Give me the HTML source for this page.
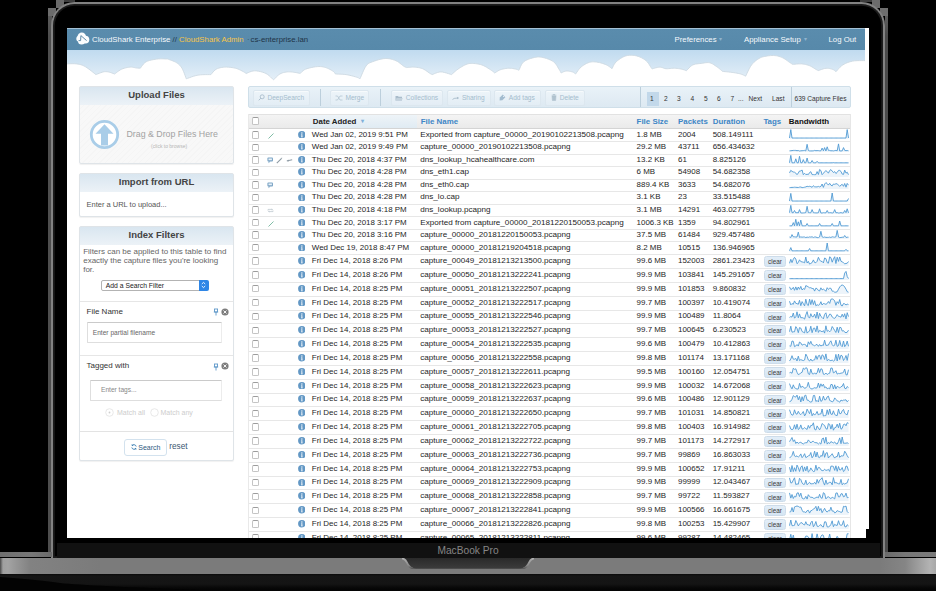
<!DOCTYPE html>
<html><head><meta charset="utf-8">
<style>
*{box-sizing:border-box}
html,body{margin:0;padding:0}
body{width:936px;height:591px;overflow:hidden;background:#000;position:relative;font-family:"Liberation Sans",sans-serif;color:#222}
.abs{position:absolute}
#lid{position:absolute;left:51.4px;top:1.8px;width:834px;height:556px;border:2.7px solid #828282;border-bottom:none;border-radius:23.5px 23.5px 0 0;background:#000;box-shadow:inset 0 0 0 1.8px #1b1b1b}
#bezel{position:absolute;left:57px;top:542.5px;width:823px;height:15px;background:#111}
#mbp{position:absolute;left:437px;top:544px;width:62px;text-align:center;font-size:10.2px;color:#858585;line-height:14px}
#sideL{position:absolute;left:0;top:552px;width:51.5px;height:5px;background:linear-gradient(90deg,#6e6e6e,#777 60%,#6a6a6a)}
#sideR{position:absolute;left:885.2px;top:552px;width:51px;height:5px;background:linear-gradient(90deg,#6a6a6a,#777 40%,#7a7a7a)}
#base{position:absolute;left:0;top:557.5px;width:936px;height:16.5px;background:linear-gradient(90deg,#4a4a4a 0px,#a0a0a0 3px,#a3a3a3 8px,#969696 16px,#828282 30px,#7b7b7b 100px,#7b7b7b 880px,#858585 905px,#b3b3b3 930px,#a8a8a8 936px)}
#notch{position:absolute;left:402px;top:557px;width:132px;height:11.5px;background:linear-gradient(#2a2a2a,#444);border-radius:0 0 10px 10px / 0 0 9px 9px}
#shadow{position:absolute;left:0;top:574px;width:936px;height:17px;background:linear-gradient(#0a0a0a 0,#151515 2px,#141414 10px,#070707 14px,#030303 17px)}
#screen{position:absolute;left:67px;top:28px;width:802px;height:510px;background:#fff;overflow:hidden}
#hdr{position:absolute;left:67px;top:28px;width:798px;height:21.6px;background:linear-gradient(#a3c0d4 0,#a3c0d4 1px,#5a8cad 1px,#5789aa 100%);color:#f6f9fc;font-size:7.8px;line-height:23px}
#hdr span{position:absolute;top:0;white-space:nowrap}
.panel{position:absolute;left:79px;width:155px;border:1px solid #dfe4e8;border-radius:2px;background:#fff;box-shadow:0 1px 1px rgba(0,0,0,.06)}
.ph{position:absolute;left:0;top:0;width:100%;height:18px;background:linear-gradient(#d9e6f0,#ecf2f7);text-align:center;font-weight:bold;font-size:9.5px;line-height:16px;color:#444}
.t{position:absolute;white-space:nowrap;line-height:1}
#tb{position:absolute;left:248px;top:86.4px;width:602.5px;height:21.8px;border:1px solid #cfdfe9;border-radius:2px;background:linear-gradient(#e9f2f8,#dde9f2)}
.btn{position:absolute;top:3px;height:16px;border:1px solid #dce7ef;border-radius:2px;background:linear-gradient(#edf4f9,#e3edf5);box-shadow:inset 0 1px 0 #f6fafc;color:#a4bccd;font-size:6.6px;line-height:14px;white-space:nowrap;text-align:center}
.ti{display:inline-block;vertical-align:middle;margin-right:2.5px;margin-top:-1.5px}
.sep{position:absolute;top:2px;width:1px;height:17px;background:#bccfdc}
.pg{position:absolute;top:0;font-size:6.6px;line-height:23px;color:#333;white-space:nowrap}
#tbl{position:absolute;left:248px;top:114.2px;width:602.5px;height:423.8px;overflow:hidden;border-left:1px solid #e9e9e9;border-right:1px solid #e6e6e6}
#th{position:absolute;left:0;top:0;width:100%;height:14.5px;background:linear-gradient(#f4f4f4,#eaeaea);border-top:1px solid #e2e2e2;border-bottom:1px solid #d4d4d4}
#th span{position:absolute;top:0;line-height:13.4px;font-size:7.9px;font-weight:bold;color:#3d86c6;white-space:nowrap}
.row{position:absolute;left:0;width:100%;border-bottom:1px solid #e7e7e7;background:#fff}
.row .c{position:absolute;top:50%;margin-top:-0.6px;transform:translateY(-50%);font-size:7.95px;line-height:1;white-space:nowrap;color:#1e1e1e}
.cb{position:absolute;left:3px;top:50%;margin-top:-4.2px;width:7px;height:7.4px;border:1px solid #c4c4c4;border-top-color:#9c9c9c;border-radius:1.8px;background:#fff}
.info{position:absolute;left:48.9px;top:50%;margin-top:-4.5px;width:7.6px;height:7.6px;line-height:0}
.ic{position:absolute;top:50%;margin-top:-3.2px}
.clear{position:absolute;left:515px;top:50%;margin-top:-5.3px;width:22px;height:10.6px;border:1px solid #cddcea;border-radius:2.5px;background:linear-gradient(#e3eef8,#d5e5f3);font-size:6.4px;line-height:9px;text-align:center;color:#3a3a3a}
.spark{position:absolute;left:540px;bottom:2px;width:60px;height:10px;line-height:0}
.spark svg{display:block}
</style></head><body>
<div class="abs" style="left:48px;top:8px;width:8px;height:8.2px;background:#6c6c6c"></div>
<div class="abs" style="left:55.9px;top:0;width:8px;height:7.8px;background:#6a6a6a"></div>
<div class="abs" style="left:63.8px;top:0;width:11px;height:2px;background:#3e3e3e"></div>
<div class="abs" style="left:48px;top:16.2px;width:3.6px;height:536px;background:linear-gradient(#5a5a5a,#4e4e4e 20px)"></div>
<div class="abs" style="left:879.7px;top:8px;width:8.3px;height:8.2px;background:#6e6e6e"></div>
<div class="abs" style="left:871.8px;top:0;width:8px;height:7.9px;background:#6c6c6c"></div>
<div class="abs" style="left:860px;top:0;width:12px;height:2px;background:#3e3e3e"></div>
<div class="abs" style="left:885.2px;top:16.2px;width:2.9px;height:536px;background:linear-gradient(#5e5e5e,#4a4a4a 20px)"></div>
<div id="lid"></div>
<div id="bezel"></div>
<div id="mbp">MacBook Pro</div>
<div id="sideL"></div>
<div id="sideR"></div>
<div id="base"></div>
<svg class="abs" style="left:401px;top:557.5px" width="134" height="11.5" viewBox="0 0 134 11.5"><defs><linearGradient id="ng" x1="0" y1="0" x2="0" y2="1"><stop offset="0" stop-color="#2a2a2a"/><stop offset="1" stop-color="#3c3c3c"/></linearGradient><linearGradient id="hl" x1="0" y1="0" x2="0" y2="1"><stop offset="0" stop-color="#b0b0b0"/><stop offset="0.7" stop-color="#8a8a8a"/><stop offset="1" stop-color="#5a5a5a"/></linearGradient></defs>
<path d="M0.5 0 Q4 0.5 6 4.5 Q9 10.8 15 10.8 L119 10.8 Q125 10.8 128 4.5 Q130 0.5 133.5 0 Z" fill="url(#ng)"/>
<path d="M1 0.3 Q4.2 0.8 6 4.6 Q8.2 9.6 12 10.4" fill="none" stroke="url(#hl)" stroke-width="1.8"/>
<path d="M133 0.3 Q129.8 0.8 128 4.6 Q125.8 9.6 122 10.4" fill="none" stroke="url(#hl)" stroke-width="1.8"/></svg>
<div id="shadow"></div>
<svg class="abs" style="left:0;top:574px" width="200" height="17" viewBox="0 0 200 17"><path d="M0 3 Q40 6 60 9 Q90 12 200 16 L200 17 L0 17 Z" fill="#030303"/></svg>

<div id="screen">
<svg width="802" height="60" viewBox="67 28 802 60" style="position:absolute;left:0;top:0"><defs><linearGradient id="sky" x1="0" y1="0" x2="0" y2="1"><stop offset="0" stop-color="#bfdaef"/><stop offset="1" stop-color="#e6f0f8"/></linearGradient></defs><rect x="67" y="49" width="802" height="32" fill="url(#sky)"/><path d="M66.00,63.90 L67.19,63.87 L68.86,63.80 L70.82,63.73 L72.90,63.70 L74.92,63.74 L76.70,63.90 L78.22,64.13 L79.61,64.40 L80.95,64.75 L82.29,65.21 L83.68,65.81 L85.20,66.60 L86.98,67.72 L89.00,69.17 L91.08,70.77 L93.04,72.33 L94.71,73.67 L95.90,74.60 L96.74,74.27 L97.93,73.80 L99.32,73.24 L100.79,72.69 L102.19,72.22 L103.40,71.90 L104.40,71.73 L105.31,71.66 L106.15,71.66 L106.97,71.72 L107.81,71.84 L108.70,72.00 L109.72,72.25 L110.84,72.60 L111.98,73.01 L113.05,73.41 L113.95,73.76 L114.60,74.00 L115.34,73.45 L116.36,72.66 L117.57,71.73 L118.90,70.78 L120.27,69.90 L121.60,69.20 L122.95,68.66 L124.40,68.19 L125.89,67.79 L127.37,67.48 L128.79,67.25 L130.10,67.10 L131.32,67.08 L132.49,67.20 L133.59,67.41 L134.64,67.64 L135.61,67.86 L136.50,68.00 L137.33,68.08 L138.10,68.13 L138.80,68.16 L139.41,68.17 L139.92,68.19 L140.30,68.20 L140.87,67.46 L141.62,66.40 L142.53,65.17 L143.59,63.90 L144.78,62.73 L146.10,61.80 L147.62,61.11 L149.36,60.53 L151.24,60.06 L153.16,59.67 L155.05,59.36 L156.80,59.10 L158.49,58.92 L160.20,58.85 L161.87,58.84 L163.43,58.89 L164.83,58.95 L166.00,59.00 L166.83,59.03 L167.35,59.05 L167.71,59.09 L168.04,59.18 L168.49,59.34 L169.20,59.60 L170.23,59.96 L171.46,60.39 L172.82,60.90 L174.20,61.47 L175.53,62.11 L176.70,62.80 L177.72,63.51 L178.67,64.24 L179.55,65.04 L180.39,65.93 L181.20,66.97 L182.00,68.20 L182.82,69.79 L183.67,71.74 L184.48,73.84 L185.22,75.86 L185.84,77.59 L186.30,78.80 L187.56,78.36 L189.29,77.72 L191.34,76.98 L193.58,76.23 L195.85,75.57 L198.00,75.10 L200.23,74.83 L202.69,74.68 L205.18,74.62 L207.51,74.61 L209.48,74.62 L210.90,74.60 L211.44,73.97 L212.15,73.08 L213.01,72.03 L213.99,70.96 L215.06,69.97 L216.20,69.20 L217.42,68.62 L218.75,68.14 L220.17,67.74 L221.66,67.44 L223.21,67.23 L224.80,67.10 L226.49,67.07 L228.30,67.15 L230.17,67.32 L232.02,67.56 L233.79,67.86 L235.40,68.20 L236.88,68.62 L238.29,69.15 L239.61,69.74 L240.83,70.34 L241.93,70.91 L242.90,71.40 L243.72,71.84 L244.40,72.26 L244.97,72.65 L245.43,73.00 L245.80,73.28 L246.10,73.50 L247.00,73.14 L248.23,72.60 L249.69,71.98 L251.31,71.40 L253.01,70.97 L254.70,70.80 L256.47,70.89 L258.41,71.16 L260.42,71.58 L262.41,72.13 L264.31,72.77 L266.00,73.50 L267.56,74.43 L269.06,75.60 L270.46,76.87 L271.70,78.10 L272.73,79.16 L273.50,79.90 L274.18,79.21 L275.12,78.23 L276.23,77.08 L277.45,75.90 L278.70,74.83 L279.90,74.00 L281.09,73.40 L282.32,72.92 L283.59,72.55 L284.87,72.27 L286.14,72.06 L287.40,71.90 L288.66,71.83 L289.95,71.85 L291.23,71.95 L292.49,72.09 L293.68,72.25 L294.80,72.40 L295.88,72.56 L296.95,72.76 L297.96,72.98 L298.87,73.19 L299.64,73.37 L300.20,73.50 L300.70,73.01 L301.33,72.32 L302.11,71.51 L303.06,70.67 L304.18,69.87 L305.50,69.20 L307.13,68.63 L309.07,68.07 L311.20,67.57 L313.37,67.14 L315.45,66.81 L317.30,66.60 L318.92,66.53 L320.41,66.56 L321.82,66.70 L323.16,66.93 L324.48,67.23 L325.80,67.60 L327.17,68.09 L328.57,68.70 L329.95,69.40 L331.24,70.12 L332.37,70.80 L333.30,71.40 L333.99,71.93 L334.48,72.45 L334.82,72.94 L335.06,73.37 L335.23,73.73 L335.40,74.00 L336.56,74.04 L338.17,74.08 L340.08,74.14 L342.14,74.23 L344.19,74.38 L346.10,74.60 L347.97,74.93 L349.94,75.36 L351.92,75.84 L353.79,76.33 L355.45,76.80 L356.80,77.20 L357.80,77.54 L358.54,77.87 L359.07,78.16 L359.45,78.42 L359.74,78.64 L360.00,78.80 L360.65,77.31 L361.54,75.16 L362.60,72.66 L363.75,70.10 L364.91,67.78 L366.00,66.00 L366.97,64.79 L367.87,63.93 L368.78,63.31 L369.78,62.81 L370.96,62.35 L372.40,61.80 L374.19,61.13 L376.27,60.43 L378.53,59.75 L380.85,59.16 L383.11,58.72 L385.20,58.50 L387.14,58.51 L389.04,58.71 L390.88,59.06 L392.65,59.53 L394.33,60.09 L395.90,60.70 L397.38,61.45 L398.80,62.37 L400.12,63.39 L401.34,64.39 L402.44,65.29 L403.40,66.00 L404.22,66.50 L404.90,66.87 L405.47,67.13 L405.93,67.32 L406.30,67.47 L406.60,67.60 L407.40,67.52 L408.51,67.39 L409.82,67.25 L411.25,67.13 L412.71,67.07 L414.10,67.10 L415.47,67.21 L416.90,67.36 L418.35,67.57 L419.80,67.85 L421.23,68.22 L422.60,68.70 L423.97,69.36 L425.37,70.20 L426.75,71.13 L428.04,72.06 L429.17,72.88 L430.10,73.50 L430.79,73.91 L431.28,74.18 L431.62,74.35 L431.86,74.45 L432.03,74.52 L432.20,74.60 L433.11,74.24 L434.35,73.70 L435.83,73.08 L437.46,72.50 L439.15,72.07 L440.80,71.90 L442.59,72.07 L444.61,72.50 L446.69,73.08 L448.65,73.70 L450.31,74.24 L451.50,74.60 L452.18,74.00 L453.10,73.17 L454.19,72.19 L455.40,71.15 L456.66,70.12 L457.90,69.20 L459.17,68.33 L460.54,67.45 L461.95,66.58 L463.36,65.77 L464.73,65.07 L466.00,64.50 L467.13,64.08 L468.14,63.77 L469.11,63.56 L470.09,63.43 L471.17,63.39 L472.40,63.40 L473.83,63.47 L475.40,63.61 L477.06,63.83 L478.76,64.13 L480.42,64.52 L482.00,65.00 L483.54,65.63 L485.10,66.42 L486.64,67.30 L488.10,68.20 L489.43,69.06 L490.60,69.80 L491.60,70.46 L492.48,71.10 L493.24,71.70 L493.87,72.23 L494.39,72.67 L494.80,73.00 L495.35,72.63 L496.09,72.11 L496.97,71.50 L497.97,70.87 L499.06,70.28 L500.20,69.80 L501.45,69.41 L502.84,69.05 L504.32,68.74 L505.83,68.48 L507.31,68.30 L508.70,68.20 L510.06,68.22 L511.45,68.34 L512.81,68.53 L514.09,68.76 L515.24,69.00 L516.20,69.20 L516.96,69.39 L517.56,69.60 L518.02,69.81 L518.38,70.01 L518.66,70.18 L518.90,70.30 L519.35,69.33 L519.93,67.94 L520.63,66.32 L521.49,64.64 L522.50,63.07 L523.70,61.80 L525.17,60.79 L526.91,59.90 L528.82,59.12 L530.78,58.46 L532.68,57.92 L534.40,57.50 L535.92,57.20 L537.31,57.02 L538.65,56.96 L539.99,57.02 L541.38,57.20 L542.90,57.50 L544.62,57.93 L546.50,58.50 L548.44,59.19 L550.34,59.98 L552.10,60.85 L553.60,61.80 L554.84,62.90 L555.91,64.17 L556.84,65.53 L557.64,66.89 L558.35,68.14 L559.00,69.20 L559.57,70.09 L560.02,70.87 L560.39,71.56 L560.68,72.15 L560.91,72.63 L561.10,73.00 L561.62,72.75 L562.31,72.37 L563.15,71.94 L564.07,71.53 L565.04,71.19 L566.00,71.00 L567.02,70.97 L568.14,71.04 L569.31,71.19 L570.45,71.40 L571.50,71.65 L572.40,71.90 L573.16,72.20 L573.82,72.59 L574.40,73.01 L574.89,73.41 L575.29,73.76 L575.60,74.00 L576.15,73.22 L576.89,72.13 L577.77,70.85 L578.77,69.50 L579.86,68.21 L581.00,67.10 L582.24,66.12 L583.60,65.17 L585.06,64.27 L586.55,63.47 L588.05,62.80 L589.50,62.30 L590.92,61.99 L592.33,61.84 L593.74,61.83 L595.16,61.92 L596.58,62.09 L598.00,62.30 L599.46,62.58 L600.98,62.96 L602.49,63.42 L603.97,63.93 L605.35,64.46 L606.60,65.00 L607.75,65.60 L608.84,66.30 L609.84,67.02 L610.72,67.70 L611.45,68.29 L612.00,68.70 L612.39,67.94 L612.89,66.87 L613.50,65.62 L614.24,64.28 L615.14,62.97 L616.20,61.80 L617.47,60.69 L618.96,59.54 L620.59,58.42 L622.32,57.39 L624.07,56.53 L625.80,55.90 L627.53,55.50 L629.33,55.29 L631.15,55.23 L632.97,55.33 L634.77,55.55 L636.50,55.90 L638.21,56.39 L639.94,57.04 L641.63,57.83 L643.25,58.72 L644.76,59.69 L646.10,60.70 L647.29,61.87 L648.37,63.26 L649.34,64.72 L650.18,66.12 L650.90,67.32 L651.50,68.20 L651.93,68.69 L652.20,68.90 L652.34,68.92 L652.40,68.83 L652.44,68.73 L652.50,68.70 L653.33,68.49 L654.50,68.17 L655.88,67.80 L657.33,67.46 L658.75,67.20 L660.00,67.10 L661.06,67.21 L662.02,67.47 L662.94,67.83 L663.87,68.20 L664.87,68.52 L666.00,68.70 L667.28,68.72 L668.69,68.63 L670.16,68.49 L671.65,68.33 L673.11,68.22 L674.50,68.20 L675.84,68.27 L677.19,68.40 L678.51,68.57 L679.77,68.77 L680.95,68.98 L682.00,69.20 L682.95,69.45 L683.83,69.75 L684.62,70.06 L685.30,70.36 L685.87,70.62 L686.30,70.80 L686.97,70.12 L687.88,69.14 L688.96,68.00 L690.17,66.84 L691.43,65.79 L692.70,65.00 L694.01,64.48 L695.41,64.12 L696.87,63.88 L698.36,63.70 L699.85,63.56 L701.30,63.40 L702.73,63.19 L704.18,62.94 L705.62,62.73 L707.04,62.60 L708.44,62.60 L709.80,62.80 L711.13,63.23 L712.46,63.87 L713.75,64.64 L715.00,65.49 L716.19,66.33 L717.30,67.10 L718.37,67.87 L719.43,68.69 L720.42,69.52 L721.31,70.29 L722.05,70.93 L722.60,71.40 L723.66,71.50 L725.13,71.64 L726.86,71.80 L728.72,71.99 L730.55,72.19 L732.20,72.40 L733.74,72.63 L735.28,72.87 L736.80,73.13 L738.25,73.40 L739.60,73.69 L740.80,74.00 L741.88,74.36 L742.86,74.77 L743.74,75.20 L744.50,75.61 L745.12,75.95 L745.60,76.20 L746.22,74.93 L747.07,73.12 L748.08,71.01 L749.20,68.80 L750.36,66.72 L751.50,65.00 L752.66,63.60 L753.90,62.33 L755.18,61.19 L756.48,60.18 L757.76,59.29 L759.00,58.50 L760.17,57.85 L761.30,57.36 L762.41,56.98 L763.54,56.69 L764.73,56.44 L766.00,56.20 L767.39,55.97 L768.87,55.77 L770.40,55.62 L771.94,55.53 L773.46,55.52 L774.90,55.60 L776.28,55.78 L777.63,56.04 L778.94,56.39 L780.23,56.80 L781.48,57.27 L782.70,57.80 L783.91,58.43 L785.11,59.19 L786.28,60.00 L787.38,60.81 L788.40,61.57 L789.30,62.20 L790.09,62.72 L790.80,63.18 L791.41,63.58 L791.94,63.91 L792.37,64.19 L792.70,64.40 L793.68,64.32 L795.05,64.19 L796.67,64.04 L798.39,63.92 L800.08,63.86 L801.60,63.90 L802.96,64.03 L804.29,64.23 L805.59,64.48 L806.85,64.80 L808.09,65.17 L809.30,65.60 L810.53,66.14 L811.77,66.81 L812.99,67.53 L814.14,68.25 L815.16,68.89 L816.00,69.40 L816.65,69.76 L817.15,70.04 L817.52,70.24 L817.80,70.39 L818.01,70.50 L818.20,70.60 L819.06,70.31 L820.26,69.88 L821.68,69.38 L823.19,68.90 L824.67,68.51 L826.00,68.30 L827.22,68.27 L828.44,68.37 L829.63,68.56 L830.76,68.82 L831.79,69.11 L832.70,69.40 L833.48,69.74 L834.17,70.16 L834.77,70.62 L835.27,71.06 L835.68,71.44 L836.00,71.70 L836.69,70.94 L837.61,69.86 L838.73,68.59 L839.97,67.27 L841.31,66.03 L842.70,65.00 L844.15,64.15 L845.70,63.37 L847.35,62.66 L849.07,62.04 L850.86,61.52 L852.70,61.10 L854.76,60.81 L857.09,60.66 L859.48,60.61 L861.73,60.60 L863.64,60.62 L865.00,60.60 L867,60.6 L867,90 L66,90 Z" fill="#fff" stroke="#cdd9e2" stroke-width="0.9"/><rect x="865" y="28" width="4" height="60" fill="#fff"/></svg>
</div>
<div class="abs" style="left:866px;top:529px;width:4px;height:10px;background:#000"></div>

<div id="hdr">
 <svg style="position:absolute;left:9px;top:3px" width="14" height="15" viewBox="0 0 14 15"><g fill="#fbfdfe"><circle cx="5.8" cy="5.6" r="4.2"/><circle cx="9.4" cy="8.6" r="3.9"/><circle cx="5.6" cy="10" r="3.6"/><circle cx="3.3" cy="7.8" r="3"/></g><path d="M2.6 9.6 L4.6 9.6 L4.9 4.6 L10.6 9.6" fill="none" stroke="#4f7f9f" stroke-width="0.9"/></svg>
 <span style="left:25px">CloudShark Enterprise</span>
 <span style="left:105.5px;color:#22384a">//</span>
 <span style="left:112px;color:#f7c548">CloudShark Admin</span>
 <span style="left:180px;color:#2f4a60">·</span>
 <span style="left:183.5px;color:#1e3346">cs-enterprise.lan</span>
 <span style="left:607.5px">Preferences</span><span style="left:652px;color:#8fb4cf;font-size:6px">▾</span>
 <span style="left:677px">Appliance Setup</span><span style="left:737px;color:#8fb4cf;font-size:6px">▾</span>
 <span style="left:761.5px">Log Out</span>
</div>

<!-- Upload Files -->
<div class="panel" style="top:86px;height:78px;background:repeating-linear-gradient(135deg,#f8f8f8 0 3px,#f5f5f5 3px 4px)">
 <div class="ph">Upload Files</div>
 <svg style="position:absolute;left:9px;top:32px" width="31" height="31" viewBox="0 0 31 31"><circle cx="15.5" cy="15.5" r="13.2" fill="#fff" stroke="#a9cde8" stroke-width="2.8"/><path d="M15.5 5.2 L24.5 14.8 L19 14.8 L19 26.5 L12 26.5 L12 14.8 L6.5 14.8 Z" fill="#a9cde8"/></svg>
 <span class="t" style="left:46.5px;top:43px;font-size:8.8px;color:#a2a2a2">Drag &amp; Drop Files Here</span>
 <span class="t" style="left:71px;top:57px;font-size:5px;color:#b5b5b5">(click to browse)</span>
</div>

<!-- Import from URL -->
<div class="panel" style="top:173px;height:43.5px">
 <div class="ph">Import from URL</div>
 <span class="t" style="left:6.5px;top:27px;font-size:7.5px;color:#555">Enter a URL to upload...</span>
</div>

<!-- Index Filters -->
<div class="panel" style="top:226.3px;height:235px">
 <div class="ph" style="height:17.5px;line-height:15.6px">Index Filters</div>
 <div class="t" style="left:3.2px;top:21px;font-size:8px;line-height:8.8px;color:#666">Filters can be applied to this table to find<br>exactly the capture files you're looking<br>for.</div>
 <div class="abs" style="left:20.8px;top:53.2px;width:107px;height:10.5px;border:1px solid #b3b3b3;border-radius:2px;background:#fff;font-size:6.8px;line-height:9px;color:#222;padding-left:4px">Add a Search Filter</div>
 <div class="abs" style="left:119.2px;top:53.2px;width:9.5px;height:10.5px;background:#2f86e6;border-radius:0 2px 2px 0"><svg width="9" height="10" viewBox="0 0 9 10" style="display:block"><path d="M2.8 4 L4.5 2.4 L6.2 4 M2.8 6 L4.5 7.6 L6.2 6" fill="none" stroke="#fff" stroke-width="0.9"/></svg></div>
 <div class="abs" style="left:0;top:74px;width:100%;height:1px;background:#e6e6e6"></div>
 <span class="t" style="left:6.5px;top:80.5px;font-size:8px;color:#333">File Name</span>
 <svg class="abs" style="left:133px;top:81px" width="6" height="8" viewBox="0 0 6 8"><path d="M1 1 h4 M1.5 1 v3 h3 v-3 M0.8 4 h4.4 M3 4 v3.5" stroke="#5d97c8" stroke-width="0.9" fill="none"/></svg>
 <svg class="abs" style="left:141px;top:80.6px" width="8" height="8" viewBox="0 0 8 8"><circle cx="4" cy="4" r="3.6" fill="#7d7d7d"/><path d="M2.5 2.5 L5.5 5.5 M5.5 2.5 L2.5 5.5" stroke="#fff" stroke-width="0.9"/></svg>
 <div class="abs" style="left:6.5px;top:95.2px;width:135px;height:21px;border:1px solid #dedede;border-top-color:#cacaca;border-right-color:#ececec;border-radius:1px;background:#fff"></div>
 <span class="t" style="left:12.8px;top:102.5px;font-size:6.6px;color:#666">Enter partial filename</span>
 <div class="abs" style="left:0;top:127.7px;width:100%;height:1px;background:#e6e6e6"></div>
 <span class="t" style="left:6.5px;top:135px;font-size:8px;color:#333">Tagged with</span>
 <svg class="abs" style="left:133px;top:135.5px" width="6" height="8" viewBox="0 0 6 8"><path d="M1 1 h4 M1.5 1 v3 h3 v-3 M0.8 4 h4.4 M3 4 v3.5" stroke="#5d97c8" stroke-width="0.9" fill="none"/></svg>
 <svg class="abs" style="left:141px;top:135px" width="8" height="8" viewBox="0 0 8 8"><circle cx="4" cy="4" r="3.6" fill="#7d7d7d"/><path d="M2.5 2.5 L5.5 5.5 M5.5 2.5 L2.5 5.5" stroke="#fff" stroke-width="0.9"/></svg>
 <div class="abs" style="left:9.5px;top:152.9px;width:132px;height:20.5px;border:1px solid #dedede;border-top-color:#cacaca;border-right-color:#ececec;border-radius:1px;background:#fff"></div>
 <span class="t" style="left:21px;top:159.5px;font-size:6.6px;color:#888">Enter tags...</span>
 <svg class="abs" style="left:25px;top:180.5px" width="9" height="9" viewBox="0 0 9 9"><circle cx="4.5" cy="4.5" r="3.8" fill="#fff" stroke="#e2e2e2" stroke-width="0.8"/><circle cx="4.5" cy="4.5" r="0.9" fill="#cfcfcf"/></svg>
 <span class="t" style="left:37px;top:181.5px;font-size:7px;color:#cdcdcd">Match all</span>
 <svg class="abs" style="left:69.5px;top:180.5px" width="9" height="9" viewBox="0 0 9 9"><circle cx="4.5" cy="4.5" r="3.8" fill="#fff" stroke="#e2e2e2" stroke-width="0.8"/></svg>
 <span class="t" style="left:80.5px;top:181.5px;font-size:7px;color:#cdcdcd">Match any</span>
 <div class="abs" style="left:0;top:204.2px;width:100%;height:1px;background:#e3e3e3"></div>
 <div class="abs" style="left:44.4px;top:212px;width:42.5px;height:17px;border:1px solid #d3e2ee;border-radius:3px;background:#fff"></div>
 <svg class="abs" style="left:49.5px;top:215.8px" width="8" height="8" viewBox="0 0 8 8"><path d="M6.2 3.5 A2.4 2.4 0 0 0 2 2.6 M1.8 4.5 A2.4 2.4 0 0 0 6 5.4" fill="none" stroke="#3c7fb3" stroke-width="1"/><path d="M1.2 1.5 L2.2 3.2 L3.4 1.9 Z M6.8 6.5 L5.8 4.8 L4.6 6.1 Z" fill="#3c7fb3"/></svg>
 <span class="t" style="left:58.3px;top:216.6px;font-size:7px;color:#2d5a80">Search</span>
 <span class="t" style="left:89.3px;top:216px;font-size:8.2px;color:#3a5670">reset</span>
</div>

<!-- toolbar -->
<div id="tb">
 <div class="btn" style="left:3.5px;width:57px"><svg class="ti" width="7" height="7" viewBox="0 0 7 7"><circle cx="4.2" cy="2.8" r="2" fill="none" stroke="#a9bccb" stroke-width="0.9"/><path d="M2.8 4.2 L0.8 6.3" stroke="#a9bccb" stroke-width="1"/></svg>DeepSearch</div>
 <div class="sep" style="left:71px"></div>
 <div class="btn" style="left:81px;width:39px"><svg class="ti" width="8" height="6" viewBox="0 0 8 6"><path d="M0.5 1 L2.5 1 L5 5 L7.5 5 M0.5 5 L2.5 5 L5 1 L7.5 1" fill="none" stroke="#b4c6d3" stroke-width="0.8"/></svg>Merge</div>
 <div class="sep" style="left:131px"></div>
 <div class="btn" style="left:141.5px;width:52.5px"><svg class="ti" width="8" height="6" viewBox="0 0 8 6"><path d="M0.5 1 L3 1 L3.6 1.8 L7 1.8 L7 5.5 L0.5 5.5 Z" fill="#a9bccb"/><path d="M1.5 3 L7.8 3 L6.8 5.5 L0.5 5.5 Z" fill="#c3d2dd"/></svg>Collections</div>
 <div class="btn" style="left:197.5px;width:44px"><svg class="ti" width="7" height="6" viewBox="0 0 7 6"><path d="M0.5 4.5 Q2 3 4 3.2 L6.5 3" fill="none" stroke="#a9bccb" stroke-width="0.9"/><path d="M5 1.8 L6.8 3 L5 4.2 Z" fill="#a9bccb"/></svg>Sharing</div>
 <div class="btn" style="left:244.5px;width:47px"><svg class="ti" width="7" height="7" viewBox="0 0 7 7"><path d="M0.6 6.4 L0.8 3.6 L3.8 0.6 L6.4 3.2 L3.4 6.2 Z" fill="#a3bccf"/><circle cx="4.6" cy="2.4" r="0.6" fill="#e6eff6"/></svg>Add tags</div>
 <div class="btn" style="left:296px;width:40px"><svg class="ti" width="6" height="7" viewBox="0 0 6 7"><path d="M0.5 1.2 H5.5 M2 1.2 V0.5 H4 V1.2 M1 2 H5 L4.6 6.5 H1.4 Z" fill="#b0c2cf" stroke="#b0c2cf" stroke-width="0.6"/></svg>Delete</div>
 <div class="sep" style="left:391px;top:0;height:20px"></div>
 <div class="abs" style="left:397.5px;top:4.5px;width:12px;height:14px;background:#c2d8ea"></div>
 <span class="pg" style="left:401px">1</span>
 <span class="pg" style="left:415px">2</span>
 <span class="pg" style="left:428px">3</span>
 <span class="pg" style="left:441.5px">4</span>
 <span class="pg" style="left:455px">5</span>
 <span class="pg" style="left:468px">6</span>
 <span class="pg" style="left:481.5px">7</span>
 <span class="pg" style="left:489px">...</span>
 <span class="pg" style="left:499.5px">Next</span>
 <span class="pg" style="left:523px">Last</span>
 <div class="sep" style="left:542px;top:0;height:20px"></div>
 <span class="pg" style="left:545.5px">639 Capture Files</span>
</div>

<!-- table -->
<div id="tbl">
 <div id="th">
  <div class="abs" style="left:61px;top:0;width:107px;height:100%;background:linear-gradient(#eef4f8,#e0ebf3)"></div>
  <div class="cb" style="left:3px"></div>
  <span style="left:63.8px;color:#222">Date Added</span><span style="left:111.5px;top:0.3px;color:#7fb0da;font-size:6px">▾</span>
  <span style="left:171.8px">File Name</span>
  <span style="left:387.6px">File Size</span>
  <span style="left:429px">Packets</span>
  <span style="left:463.7px">Duration</span>
  <span style="left:514.4px">Tags</span>
  <span style="left:539.8px;color:#111">Bandwidth</span>
 </div>
<div class="row" style="top:15.40px;height:12.54px"><span class="cb"></span><svg class="ic" style="left:18px" width="8" height="8" viewBox="0 0 8 8"><path d="M1.5 6.5 L6.5 1.5" stroke="#72b59c" stroke-width="0.9"/></svg><span class="info"><svg width="7.6" height="7.6" viewBox="0 0 8 8"><circle cx="4" cy="4" r="3.9" fill="#6398c5"/><circle cx="4.1" cy="2.1" r="0.7" fill="#fff"/><path d="M3.3 3.3 H4.6 V6.1 H5 V6.7 H3.2 V6.1 H3.6 V3.9 H3.3 Z" fill="#fff"/></svg></span><span class="c" style="left:62.8px">Wed Jan 02, 2019 9:51 PM</span><span class="c" style="left:171.3px;font-size:8.1px">Exported from capture_00000_20190102213508.pcapng</span><span class="c" style="left:387.6px">1.8 MB</span><span class="c" style="left:429px">2004</span><span class="c" style="left:463.7px">508.149111</span><span class="spark"><svg width="60" height="10" viewBox="0 0 60 10"><polygon points="0.5,10 0.5,9.0 1.8,0.6 3.0,9.0 4.3,9.0 5.5,9.0 6.8,9.0 8.0,9.0 9.3,9.0 10.5,9.0 11.8,9.0 13.1,9.0 14.3,9.0 15.6,9.0 16.8,9.0 18.1,9.0 19.3,9.0 20.6,9.0 21.8,9.0 23.1,9.0 24.4,9.0 25.6,9.0 26.9,9.0 28.1,9.0 29.4,9.0 30.6,9.0 31.9,9.0 33.1,9.0 34.4,9.0 35.6,9.0 36.9,9.0 38.2,9.0 39.4,9.0 40.7,9.0 41.9,9.0 43.2,9.0 44.4,9.0 45.7,9.0 46.9,9.0 48.2,9.0 49.5,9.0 50.7,9.0 52.0,9.0 53.2,9.0 54.5,9.0 55.7,9.0 57.0,9.0 58.2,0.6 59.5,9.0 59.5,10" fill="#edf4fa"/><polyline points="0.5,9.0 1.8,0.6 3.0,9.0 4.3,9.0 5.5,9.0 6.8,9.0 8.0,9.0 9.3,9.0 10.5,9.0 11.8,9.0 13.1,9.0 14.3,9.0 15.6,9.0 16.8,9.0 18.1,9.0 19.3,9.0 20.6,9.0 21.8,9.0 23.1,9.0 24.4,9.0 25.6,9.0 26.9,9.0 28.1,9.0 29.4,9.0 30.6,9.0 31.9,9.0 33.1,9.0 34.4,9.0 35.6,9.0 36.9,9.0 38.2,9.0 39.4,9.0 40.7,9.0 41.9,9.0 43.2,9.0 44.4,9.0 45.7,9.0 46.9,9.0 48.2,9.0 49.5,9.0 50.7,9.0 52.0,9.0 53.2,9.0 54.5,9.0 55.7,9.0 57.0,9.0 58.2,0.6 59.5,9.0" fill="none" stroke="#4f9ad4" stroke-width="0.9" stroke-linejoin="round"/></svg></span></div>
<div class="row" style="top:27.94px;height:12.54px"><span class="cb"></span><span class="info"><svg width="7.6" height="7.6" viewBox="0 0 8 8"><circle cx="4" cy="4" r="3.9" fill="#6398c5"/><circle cx="4.1" cy="2.1" r="0.7" fill="#fff"/><path d="M3.3 3.3 H4.6 V6.1 H5 V6.7 H3.2 V6.1 H3.6 V3.9 H3.3 Z" fill="#fff"/></svg></span><span class="c" style="left:62.8px">Wed Jan 02, 2019 9:49 PM</span><span class="c" style="left:171.3px;font-size:8.1px">capture_00000_20190102213508.pcapng</span><span class="c" style="left:387.6px">29.2 MB</span><span class="c" style="left:429px">43711</span><span class="c" style="left:463.7px">656.434632</span><span class="spark"><svg width="60" height="10" viewBox="0 0 60 10"><polygon points="0.5,10 0.5,8.8 1.8,8.7 3.0,8.6 4.3,8.4 5.5,8.4 6.8,8.4 8.0,8.7 9.3,8.5 10.5,9.0 11.8,8.8 13.1,8.7 14.3,8.6 15.6,8.4 16.8,8.9 18.1,2.3 19.3,8.4 20.6,8.9 21.8,8.9 23.1,8.9 24.4,8.8 25.6,8.4 26.9,8.7 28.1,8.6 29.4,8.6 30.6,8.8 31.9,8.8 33.1,6.1 34.4,8.8 35.6,5.6 36.9,9.0 38.2,4.8 39.4,8.4 40.7,8.4 41.9,8.8 43.2,8.7 44.4,8.9 45.7,8.6 46.9,8.4 48.2,8.8 49.5,1.9 50.7,9.0 52.0,8.9 53.2,8.9 54.5,5.6 55.7,8.4 57.0,8.7 58.2,8.5 59.5,8.8 59.5,10" fill="#edf4fa"/><polyline points="0.5,8.8 1.8,8.7 3.0,8.6 4.3,8.4 5.5,8.4 6.8,8.4 8.0,8.7 9.3,8.5 10.5,9.0 11.8,8.8 13.1,8.7 14.3,8.6 15.6,8.4 16.8,8.9 18.1,2.3 19.3,8.4 20.6,8.9 21.8,8.9 23.1,8.9 24.4,8.8 25.6,8.4 26.9,8.7 28.1,8.6 29.4,8.6 30.6,8.8 31.9,8.8 33.1,6.1 34.4,8.8 35.6,5.6 36.9,9.0 38.2,4.8 39.4,8.4 40.7,8.4 41.9,8.8 43.2,8.7 44.4,8.9 45.7,8.6 46.9,8.4 48.2,8.8 49.5,1.9 50.7,9.0 52.0,8.9 53.2,8.9 54.5,5.6 55.7,8.4 57.0,8.7 58.2,8.5 59.5,8.8" fill="none" stroke="#4f9ad4" stroke-width="0.9" stroke-linejoin="round"/></svg></span></div>
<div class="row" style="top:40.48px;height:12.54px"><span class="cb"></span><svg class="ic" style="left:18.2px" width="7" height="7" viewBox="0 0 7 7"><rect x="0.4" y="0.6" width="5.6" height="4" rx="1" fill="#7ea6c6"/><path d="M1.4 4.3 L1.6 6.3 L3.4 4.3 Z" fill="#7ea6c6"/><rect x="1.5" y="1.5" width="3.4" height="1.7" fill="#e8f1f8"/></svg><svg class="ic" style="left:27.4px" width="7" height="7" viewBox="0 0 7 7"><path d="M0.8 6.2 L5.6 1.4" stroke="#8d9aa4" stroke-width="1.1"/><path d="M5.2 1 L6.2 0.4 L6 1.8 Z" fill="#8d9aa4"/></svg><svg class="ic" style="left:36.8px" width="7" height="7" viewBox="0 0 7 7"><path d="M6.2 2.8 L1.6 3.8" stroke="#8d9aa4" stroke-width="1.1"/><path d="M0.4 4 L2.4 2.6 L2.6 4.8 Z" fill="#8d9aa4"/></svg><span class="info"><svg width="7.6" height="7.6" viewBox="0 0 8 8"><circle cx="4" cy="4" r="3.9" fill="#6398c5"/><circle cx="4.1" cy="2.1" r="0.7" fill="#fff"/><path d="M3.3 3.3 H4.6 V6.1 H5 V6.7 H3.2 V6.1 H3.6 V3.9 H3.3 Z" fill="#fff"/></svg></span><span class="c" style="left:62.8px">Thu Dec 20, 2018 4:37 PM</span><span class="c" style="left:171.3px;font-size:8.1px">dns_lookup_hcahealthcare.com</span><span class="c" style="left:387.6px">13.2 KB</span><span class="c" style="left:429px">61</span><span class="c" style="left:463.7px">8.825126</span><span class="spark"><svg width="60" height="10" viewBox="0 0 60 10"><polygon points="0.5,10 0.5,8.8 1.8,1.4 3.0,8.8 4.3,8.8 5.5,8.8 6.8,4.8 8.0,8.8 9.3,8.8 10.5,2.3 11.8,8.8 13.1,8.8 14.3,5.6 15.6,8.8 16.8,8.8 18.1,4.0 19.3,8.8 20.6,8.8 21.8,8.8 23.1,6.5 24.4,8.8 25.6,8.8 26.9,8.8 28.1,7.3 29.4,8.8 30.6,8.8 31.9,8.8 33.1,8.8 34.4,8.8 35.6,8.8 36.9,8.8 38.2,8.8 39.4,8.8 40.7,8.8 41.9,8.8 43.2,8.8 44.4,8.6 45.7,8.8 46.9,8.8 48.2,8.8 49.5,8.8 50.7,8.8 52.0,8.8 53.2,8.8 54.5,8.8 55.7,8.8 57.0,8.8 58.2,8.8 59.5,8.8 59.5,10" fill="#edf4fa"/><polyline points="0.5,8.8 1.8,1.4 3.0,8.8 4.3,8.8 5.5,8.8 6.8,4.8 8.0,8.8 9.3,8.8 10.5,2.3 11.8,8.8 13.1,8.8 14.3,5.6 15.6,8.8 16.8,8.8 18.1,4.0 19.3,8.8 20.6,8.8 21.8,8.8 23.1,6.5 24.4,8.8 25.6,8.8 26.9,8.8 28.1,7.3 29.4,8.8 30.6,8.8 31.9,8.8 33.1,8.8 34.4,8.8 35.6,8.8 36.9,8.8 38.2,8.8 39.4,8.8 40.7,8.8 41.9,8.8 43.2,8.8 44.4,8.6 45.7,8.8 46.9,8.8 48.2,8.8 49.5,8.8 50.7,8.8 52.0,8.8 53.2,8.8 54.5,8.8 55.7,8.8 57.0,8.8 58.2,8.8 59.5,8.8" fill="none" stroke="#4f9ad4" stroke-width="0.9" stroke-linejoin="round"/></svg></span></div>
<div class="row" style="top:53.02px;height:12.54px"><span class="cb"></span><span class="info"><svg width="7.6" height="7.6" viewBox="0 0 8 8"><circle cx="4" cy="4" r="3.9" fill="#6398c5"/><circle cx="4.1" cy="2.1" r="0.7" fill="#fff"/><path d="M3.3 3.3 H4.6 V6.1 H5 V6.7 H3.2 V6.1 H3.6 V3.9 H3.3 Z" fill="#fff"/></svg></span><span class="c" style="left:62.8px">Thu Dec 20, 2018 4:28 PM</span><span class="c" style="left:171.3px;font-size:8.1px">dns_eth1.cap</span><span class="c" style="left:387.6px">6 MB</span><span class="c" style="left:429px">54908</span><span class="c" style="left:463.7px">54.682358</span><span class="spark"><svg width="60" height="10" viewBox="0 0 60 10"><polygon points="0.5,10 0.5,5.9 1.8,3.3 3.0,4.4 4.3,5.0 5.5,5.2 6.8,6.1 8.0,7.7 9.3,6.0 10.5,4.0 11.8,3.9 13.1,3.0 14.3,7.7 15.6,6.3 16.8,7.6 18.1,7.2 19.3,7.6 20.6,5.5 21.8,4.7 23.1,7.6 24.4,7.6 25.6,7.7 26.9,7.6 28.1,4.6 29.4,7.5 30.6,2.5 31.9,3.6 33.1,7.7 34.4,6.4 35.6,4.7 36.9,3.7 38.2,4.6 39.4,6.2 40.7,3.5 41.9,2.6 43.2,4.1 44.4,5.5 45.7,4.6 46.9,6.5 48.2,5.4 49.5,3.4 50.7,3.4 52.0,4.5 53.2,7.1 54.5,7.4 55.7,3.1 57.0,6.1 58.2,5.2 59.5,7.7 59.5,10" fill="#edf4fa"/><polyline points="0.5,5.9 1.8,3.3 3.0,4.4 4.3,5.0 5.5,5.2 6.8,6.1 8.0,7.7 9.3,6.0 10.5,4.0 11.8,3.9 13.1,3.0 14.3,7.7 15.6,6.3 16.8,7.6 18.1,7.2 19.3,7.6 20.6,5.5 21.8,4.7 23.1,7.6 24.4,7.6 25.6,7.7 26.9,7.6 28.1,4.6 29.4,7.5 30.6,2.5 31.9,3.6 33.1,7.7 34.4,6.4 35.6,4.7 36.9,3.7 38.2,4.6 39.4,6.2 40.7,3.5 41.9,2.6 43.2,4.1 44.4,5.5 45.7,4.6 46.9,6.5 48.2,5.4 49.5,3.4 50.7,3.4 52.0,4.5 53.2,7.1 54.5,7.4 55.7,3.1 57.0,6.1 58.2,5.2 59.5,7.7" fill="none" stroke="#4f9ad4" stroke-width="0.9" stroke-linejoin="round"/></svg></span></div>
<div class="row" style="top:65.56px;height:12.54px"><span class="cb"></span><svg class="ic" style="left:18.2px" width="7" height="7" viewBox="0 0 7 7"><rect x="0.4" y="0.6" width="5.6" height="4" rx="1" fill="#7ea6c6"/><path d="M1.4 4.3 L1.6 6.3 L3.4 4.3 Z" fill="#7ea6c6"/><rect x="1.5" y="1.5" width="3.4" height="1.7" fill="#e8f1f8"/></svg><span class="info"><svg width="7.6" height="7.6" viewBox="0 0 8 8"><circle cx="4" cy="4" r="3.9" fill="#6398c5"/><circle cx="4.1" cy="2.1" r="0.7" fill="#fff"/><path d="M3.3 3.3 H4.6 V6.1 H5 V6.7 H3.2 V6.1 H3.6 V3.9 H3.3 Z" fill="#fff"/></svg></span><span class="c" style="left:62.8px">Thu Dec 20, 2018 4:28 PM</span><span class="c" style="left:171.3px;font-size:8.1px">dns_eth0.cap</span><span class="c" style="left:387.6px">889.4 KB</span><span class="c" style="left:429px">3633</span><span class="c" style="left:463.7px">54.682076</span><span class="spark"><svg width="60" height="10" viewBox="0 0 60 10"><polygon points="0.5,10 0.5,8.6 1.8,8.5 3.0,8.4 4.3,8.4 5.5,8.2 6.8,8.3 8.0,8.4 9.3,8.5 10.5,8.1 11.8,8.0 13.1,8.6 14.3,8.5 15.6,8.2 16.8,7.9 18.1,7.3 19.3,7.6 20.6,7.3 21.8,7.6 23.1,8.3 24.4,6.7 25.6,7.8 26.9,7.9 28.1,7.9 29.4,7.4 30.6,7.9 31.9,7.4 33.1,5.0 34.4,8.4 35.6,5.1 36.9,3.6 38.2,4.6 39.4,6.1 40.7,4.3 41.9,6.2 43.2,6.9 44.4,5.0 45.7,5.3 46.9,4.8 48.2,4.8 49.5,6.2 50.7,7.4 52.0,6.1 53.2,5.3 54.5,7.3 55.7,4.5 57.0,8.2 58.2,4.4 59.5,6.2 59.5,10" fill="#edf4fa"/><polyline points="0.5,8.6 1.8,8.5 3.0,8.4 4.3,8.4 5.5,8.2 6.8,8.3 8.0,8.4 9.3,8.5 10.5,8.1 11.8,8.0 13.1,8.6 14.3,8.5 15.6,8.2 16.8,7.9 18.1,7.3 19.3,7.6 20.6,7.3 21.8,7.6 23.1,8.3 24.4,6.7 25.6,7.8 26.9,7.9 28.1,7.9 29.4,7.4 30.6,7.9 31.9,7.4 33.1,5.0 34.4,8.4 35.6,5.1 36.9,3.6 38.2,4.6 39.4,6.1 40.7,4.3 41.9,6.2 43.2,6.9 44.4,5.0 45.7,5.3 46.9,4.8 48.2,4.8 49.5,6.2 50.7,7.4 52.0,6.1 53.2,5.3 54.5,7.3 55.7,4.5 57.0,8.2 58.2,4.4 59.5,6.2" fill="none" stroke="#4f9ad4" stroke-width="0.9" stroke-linejoin="round"/></svg></span></div>
<div class="row" style="top:78.10px;height:12.54px"><span class="cb"></span><span class="info"><svg width="7.6" height="7.6" viewBox="0 0 8 8"><circle cx="4" cy="4" r="3.9" fill="#6398c5"/><circle cx="4.1" cy="2.1" r="0.7" fill="#fff"/><path d="M3.3 3.3 H4.6 V6.1 H5 V6.7 H3.2 V6.1 H3.6 V3.9 H3.3 Z" fill="#fff"/></svg></span><span class="c" style="left:62.8px">Thu Dec 20, 2018 4:28 PM</span><span class="c" style="left:171.3px;font-size:8.1px">dns_lo.cap</span><span class="c" style="left:387.6px">3.1 KB</span><span class="c" style="left:429px">23</span><span class="c" style="left:463.7px">33.515488</span><span class="spark"><svg width="60" height="10" viewBox="0 0 60 10"><polygon points="0.5,10 0.5,9.0 1.8,1.4 3.0,9.0 4.3,9.0 5.5,9.0 6.8,9.0 8.0,9.0 9.3,9.0 10.5,9.0 11.8,9.0 13.1,9.0 14.3,9.0 15.6,9.0 16.8,9.0 18.1,9.0 19.3,9.0 20.6,9.0 21.8,9.0 23.1,9.0 24.4,9.0 25.6,9.0 26.9,9.0 28.1,9.0 29.4,9.0 30.6,9.0 31.9,9.0 33.1,9.0 34.4,9.0 35.6,9.0 36.9,9.0 38.2,9.0 39.4,9.0 40.7,9.0 41.9,9.0 43.2,1.0 44.4,9.0 45.7,9.0 46.9,9.0 48.2,9.0 49.5,9.0 50.7,9.0 52.0,9.0 53.2,9.0 54.5,9.0 55.7,9.0 57.0,9.0 58.2,9.0 59.5,6.5 59.5,10" fill="#edf4fa"/><polyline points="0.5,9.0 1.8,1.4 3.0,9.0 4.3,9.0 5.5,9.0 6.8,9.0 8.0,9.0 9.3,9.0 10.5,9.0 11.8,9.0 13.1,9.0 14.3,9.0 15.6,9.0 16.8,9.0 18.1,9.0 19.3,9.0 20.6,9.0 21.8,9.0 23.1,9.0 24.4,9.0 25.6,9.0 26.9,9.0 28.1,9.0 29.4,9.0 30.6,9.0 31.9,9.0 33.1,9.0 34.4,9.0 35.6,9.0 36.9,9.0 38.2,9.0 39.4,9.0 40.7,9.0 41.9,9.0 43.2,1.0 44.4,9.0 45.7,9.0 46.9,9.0 48.2,9.0 49.5,9.0 50.7,9.0 52.0,9.0 53.2,9.0 54.5,9.0 55.7,9.0 57.0,9.0 58.2,9.0 59.5,6.5" fill="none" stroke="#4f9ad4" stroke-width="0.9" stroke-linejoin="round"/></svg></span></div>
<div class="row" style="top:90.64px;height:12.54px"><span class="cb"></span><svg class="ic" style="left:17.8px" width="7" height="7" viewBox="0 0 7 7"><path d="M1 3.6 V2.4 H5.2 M6 3.4 V4.6 H1.8" fill="none" stroke="#c0cad1" stroke-width="0.8"/><path d="M4.6 1.4 L6 2.4 L4.6 3.4 Z M2.4 3.6 L1 4.6 L2.4 5.6 Z" fill="#c0cad1"/></svg><span class="info"><svg width="7.6" height="7.6" viewBox="0 0 8 8"><circle cx="4" cy="4" r="3.9" fill="#6398c5"/><circle cx="4.1" cy="2.1" r="0.7" fill="#fff"/><path d="M3.3 3.3 H4.6 V6.1 H5 V6.7 H3.2 V6.1 H3.6 V3.9 H3.3 Z" fill="#fff"/></svg></span><span class="c" style="left:62.8px">Thu Dec 20, 2018 4:18 PM</span><span class="c" style="left:171.3px;font-size:8.1px">dns_lookup.pcapng</span><span class="c" style="left:387.6px">3.1 MB</span><span class="c" style="left:429px">14291</span><span class="c" style="left:463.7px">463.027795</span><span class="spark"><svg width="60" height="10" viewBox="0 0 60 10"><polygon points="0.5,10 0.5,8.7 1.8,1.4 3.0,8.7 4.3,8.7 5.5,6.5 6.8,8.9 8.0,8.6 9.3,8.9 10.5,5.6 11.8,8.9 13.1,9.0 14.3,8.9 15.6,8.8 16.8,8.6 18.1,2.3 19.3,8.6 20.6,8.7 21.8,8.8 23.1,5.6 24.4,8.7 25.6,8.8 26.9,8.9 28.1,8.9 29.4,8.7 30.6,4.8 31.9,9.0 33.1,9.0 34.4,8.7 35.6,8.8 36.9,8.9 38.2,6.5 39.4,8.9 40.7,8.7 41.9,8.7 43.2,9.0 44.4,8.7 45.7,5.6 46.9,8.8 48.2,8.6 49.5,9.0 50.7,8.9 52.0,8.6 53.2,9.0 54.5,8.9 55.7,6.5 57.0,8.7 58.2,4.8 59.5,8.9 59.5,10" fill="#edf4fa"/><polyline points="0.5,8.7 1.8,1.4 3.0,8.7 4.3,8.7 5.5,6.5 6.8,8.9 8.0,8.6 9.3,8.9 10.5,5.6 11.8,8.9 13.1,9.0 14.3,8.9 15.6,8.8 16.8,8.6 18.1,2.3 19.3,8.6 20.6,8.7 21.8,8.8 23.1,5.6 24.4,8.7 25.6,8.8 26.9,8.9 28.1,8.9 29.4,8.7 30.6,4.8 31.9,9.0 33.1,9.0 34.4,8.7 35.6,8.8 36.9,8.9 38.2,6.5 39.4,8.9 40.7,8.7 41.9,8.7 43.2,9.0 44.4,8.7 45.7,5.6 46.9,8.8 48.2,8.6 49.5,9.0 50.7,8.9 52.0,8.6 53.2,9.0 54.5,8.9 55.7,6.5 57.0,8.7 58.2,4.8 59.5,8.9" fill="none" stroke="#4f9ad4" stroke-width="0.9" stroke-linejoin="round"/></svg></span></div>
<div class="row" style="top:103.18px;height:12.54px"><span class="cb"></span><svg class="ic" style="left:18px" width="8" height="8" viewBox="0 0 8 8"><path d="M1.5 6.5 L6.5 1.5" stroke="#72b59c" stroke-width="0.9"/></svg><span class="info"><svg width="7.6" height="7.6" viewBox="0 0 8 8"><circle cx="4" cy="4" r="3.9" fill="#6398c5"/><circle cx="4.1" cy="2.1" r="0.7" fill="#fff"/><path d="M3.3 3.3 H4.6 V6.1 H5 V6.7 H3.2 V6.1 H3.6 V3.9 H3.3 Z" fill="#fff"/></svg></span><span class="c" style="left:62.8px">Thu Dec 20, 2018 3:17 PM</span><span class="c" style="left:171.3px;font-size:8.1px">Exported from capture_00000_20181220150053.pcapng</span><span class="c" style="left:387.6px">1006.3 KB</span><span class="c" style="left:429px">1359</span><span class="c" style="left:463.7px">94.802961</span><span class="spark"><svg width="60" height="10" viewBox="0 0 60 10"><polygon points="0.5,10 0.5,8.8 1.8,8.8 3.0,8.8 4.3,5.6 5.5,8.8 6.8,2.3 8.0,8.8 9.3,4.8 10.5,8.8 11.8,3.1 13.1,8.8 14.3,8.8 15.6,8.8 16.8,8.8 18.1,6.5 19.3,8.8 20.6,8.8 21.8,8.8 23.1,8.8 24.4,8.8 25.6,8.8 26.9,8.8 28.1,8.8 29.4,8.8 30.6,6.5 31.9,8.8 33.1,8.8 34.4,8.8 35.6,8.8 36.9,8.8 38.2,8.8 39.4,8.8 40.7,8.8 41.9,8.8 43.2,6.5 44.4,8.8 45.7,8.8 46.9,8.8 48.2,8.8 49.5,8.8 50.7,4.0 52.0,8.8 53.2,8.8 54.5,8.8 55.7,8.8 57.0,8.8 58.2,8.8 59.5,8.8 59.5,10" fill="#edf4fa"/><polyline points="0.5,8.8 1.8,8.8 3.0,8.8 4.3,5.6 5.5,8.8 6.8,2.3 8.0,8.8 9.3,4.8 10.5,8.8 11.8,3.1 13.1,8.8 14.3,8.8 15.6,8.8 16.8,8.8 18.1,6.5 19.3,8.8 20.6,8.8 21.8,8.8 23.1,8.8 24.4,8.8 25.6,8.8 26.9,8.8 28.1,8.8 29.4,8.8 30.6,6.5 31.9,8.8 33.1,8.8 34.4,8.8 35.6,8.8 36.9,8.8 38.2,8.8 39.4,8.8 40.7,8.8 41.9,8.8 43.2,6.5 44.4,8.8 45.7,8.8 46.9,8.8 48.2,8.8 49.5,8.8 50.7,4.0 52.0,8.8 53.2,8.8 54.5,8.8 55.7,8.8 57.0,8.8 58.2,8.8 59.5,8.8" fill="none" stroke="#4f9ad4" stroke-width="0.9" stroke-linejoin="round"/></svg></span></div>
<div class="row" style="top:115.72px;height:12.54px"><span class="cb"></span><span class="info"><svg width="7.6" height="7.6" viewBox="0 0 8 8"><circle cx="4" cy="4" r="3.9" fill="#6398c5"/><circle cx="4.1" cy="2.1" r="0.7" fill="#fff"/><path d="M3.3 3.3 H4.6 V6.1 H5 V6.7 H3.2 V6.1 H3.6 V3.9 H3.3 Z" fill="#fff"/></svg></span><span class="c" style="left:62.8px">Thu Dec 20, 2018 3:16 PM</span><span class="c" style="left:171.3px;font-size:8.1px">capture_00000_20181220150053.pcapng</span><span class="c" style="left:387.6px">37.5 MB</span><span class="c" style="left:429px">61484</span><span class="c" style="left:463.7px">929.457486</span><span class="spark"><svg width="60" height="10" viewBox="0 0 60 10"><polygon points="0.5,10 0.5,8.0 1.8,8.5 3.0,5.6 4.3,7.9 5.5,7.8 6.8,8.0 8.0,8.0 9.3,3.1 10.5,8.4 11.8,7.9 13.1,8.2 14.3,8.0 15.6,8.0 16.8,8.6 18.1,8.1 19.3,8.4 20.6,7.9 21.8,8.1 23.1,7.8 24.4,8.5 25.6,8.0 26.9,8.0 28.1,8.6 29.4,8.6 30.6,8.0 31.9,2.3 33.1,7.8 34.4,8.4 35.6,8.0 36.9,8.4 38.2,8.4 39.4,8.4 40.7,8.1 41.9,8.5 43.2,7.8 44.4,8.0 45.7,8.2 46.9,7.9 48.2,1.4 49.5,8.1 50.7,8.6 52.0,8.5 53.2,8.2 54.5,8.4 55.7,6.5 57.0,8.5 58.2,8.2 59.5,8.2 59.5,10" fill="#edf4fa"/><polyline points="0.5,8.0 1.8,8.5 3.0,5.6 4.3,7.9 5.5,7.8 6.8,8.0 8.0,8.0 9.3,3.1 10.5,8.4 11.8,7.9 13.1,8.2 14.3,8.0 15.6,8.0 16.8,8.6 18.1,8.1 19.3,8.4 20.6,7.9 21.8,8.1 23.1,7.8 24.4,8.5 25.6,8.0 26.9,8.0 28.1,8.6 29.4,8.6 30.6,8.0 31.9,2.3 33.1,7.8 34.4,8.4 35.6,8.0 36.9,8.4 38.2,8.4 39.4,8.4 40.7,8.1 41.9,8.5 43.2,7.8 44.4,8.0 45.7,8.2 46.9,7.9 48.2,1.4 49.5,8.1 50.7,8.6 52.0,8.5 53.2,8.2 54.5,8.4 55.7,6.5 57.0,8.5 58.2,8.2 59.5,8.2" fill="none" stroke="#4f9ad4" stroke-width="0.9" stroke-linejoin="round"/></svg></span></div>
<div class="row" style="top:128.26px;height:12.54px"><span class="cb"></span><span class="info"><svg width="7.6" height="7.6" viewBox="0 0 8 8"><circle cx="4" cy="4" r="3.9" fill="#6398c5"/><circle cx="4.1" cy="2.1" r="0.7" fill="#fff"/><path d="M3.3 3.3 H4.6 V6.1 H5 V6.7 H3.2 V6.1 H3.6 V3.9 H3.3 Z" fill="#fff"/></svg></span><span class="c" style="left:62.8px">Wed Dec 19, 2018 8:47 PM</span><span class="c" style="left:171.3px;font-size:8.1px">capture_00000_20181219204518.pcapng</span><span class="c" style="left:387.6px">8.2 MB</span><span class="c" style="left:429px">10515</span><span class="c" style="left:463.7px">136.946965</span><span class="spark"><svg width="60" height="10" viewBox="0 0 60 10"><polygon points="0.5,10 0.5,8.8 1.8,5.6 3.0,8.8 4.3,8.8 5.5,8.8 6.8,8.8 8.0,8.8 9.3,8.8 10.5,8.8 11.8,8.8 13.1,8.8 14.3,8.8 15.6,8.8 16.8,8.8 18.1,8.8 19.3,8.8 20.6,6.5 21.8,8.8 23.1,8.8 24.4,8.8 25.6,8.8 26.9,8.8 28.1,8.8 29.4,8.8 30.6,8.8 31.9,8.8 33.1,8.8 34.4,8.8 35.6,8.8 36.9,8.8 38.2,1.0 39.4,8.8 40.7,8.8 41.9,8.8 43.2,8.8 44.4,8.8 45.7,8.8 46.9,8.8 48.2,8.8 49.5,8.8 50.7,8.8 52.0,8.8 53.2,8.8 54.5,8.8 55.7,8.8 57.0,7.3 58.2,8.8 59.5,8.8 59.5,10" fill="#edf4fa"/><polyline points="0.5,8.8 1.8,5.6 3.0,8.8 4.3,8.8 5.5,8.8 6.8,8.8 8.0,8.8 9.3,8.8 10.5,8.8 11.8,8.8 13.1,8.8 14.3,8.8 15.6,8.8 16.8,8.8 18.1,8.8 19.3,8.8 20.6,6.5 21.8,8.8 23.1,8.8 24.4,8.8 25.6,8.8 26.9,8.8 28.1,8.8 29.4,8.8 30.6,8.8 31.9,8.8 33.1,8.8 34.4,8.8 35.6,8.8 36.9,8.8 38.2,1.0 39.4,8.8 40.7,8.8 41.9,8.8 43.2,8.8 44.4,8.8 45.7,8.8 46.9,8.8 48.2,8.8 49.5,8.8 50.7,8.8 52.0,8.8 53.2,8.8 54.5,8.8 55.7,8.8 57.0,7.3 58.2,8.8 59.5,8.8" fill="none" stroke="#4f9ad4" stroke-width="0.9" stroke-linejoin="round"/></svg></span></div>
<div class="row" style="top:140.80px;height:14.04px"><span class="cb"></span><span class="info"><svg width="7.6" height="7.6" viewBox="0 0 8 8"><circle cx="4" cy="4" r="3.9" fill="#6398c5"/><circle cx="4.1" cy="2.1" r="0.7" fill="#fff"/><path d="M3.3 3.3 H4.6 V6.1 H5 V6.7 H3.2 V6.1 H3.6 V3.9 H3.3 Z" fill="#fff"/></svg></span><span class="c" style="left:62.8px">Fri Dec 14, 2018 8:26 PM</span><span class="c" style="left:171.3px;font-size:8.1px">capture_00049_20181213213500.pcapng</span><span class="c" style="left:387.6px">99.6 MB</span><span class="c" style="left:429px">152003</span><span class="c" style="left:463.7px">2861.23423</span><span class="clear">clear</span><span class="spark"><svg width="60" height="10" viewBox="0 0 60 10"><polygon points="0.5,10 0.5,7.3 1.8,3.3 3.0,6.6 4.3,3.2 5.5,1.4 6.8,3.0 8.0,7.7 9.3,6.5 10.5,3.8 11.8,5.6 13.1,5.9 14.3,6.2 15.6,6.8 16.8,1.0 18.1,7.0 19.3,5.3 20.6,8.1 21.8,7.4 23.1,6.6 24.4,3.9 25.6,6.5 26.9,6.7 28.1,5.3 29.4,1.3 30.6,3.9 31.9,5.4 33.1,5.4 34.4,6.9 35.6,2.0 36.9,2.6 38.2,6.6 39.4,7.2 40.7,0.8 41.9,1.7 43.2,6.2 44.4,3.1 45.7,0.7 46.9,7.5 48.2,1.2 49.5,5.4 50.7,1.0 52.0,5.3 53.2,5.9 54.5,6.7 55.7,7.8 57.0,7.5 58.2,7.2 59.5,5.5 59.5,10" fill="#edf4fa"/><polyline points="0.5,7.3 1.8,3.3 3.0,6.6 4.3,3.2 5.5,1.4 6.8,3.0 8.0,7.7 9.3,6.5 10.5,3.8 11.8,5.6 13.1,5.9 14.3,6.2 15.6,6.8 16.8,1.0 18.1,7.0 19.3,5.3 20.6,8.1 21.8,7.4 23.1,6.6 24.4,3.9 25.6,6.5 26.9,6.7 28.1,5.3 29.4,1.3 30.6,3.9 31.9,5.4 33.1,5.4 34.4,6.9 35.6,2.0 36.9,2.6 38.2,6.6 39.4,7.2 40.7,0.8 41.9,1.7 43.2,6.2 44.4,3.1 45.7,0.7 46.9,7.5 48.2,1.2 49.5,5.4 50.7,1.0 52.0,5.3 53.2,5.9 54.5,6.7 55.7,7.8 57.0,7.5 58.2,7.2 59.5,5.5" fill="none" stroke="#4f9ad4" stroke-width="0.9" stroke-linejoin="round"/></svg></span></div>
<div class="row" style="top:154.84px;height:13.84px"><span class="cb"></span><span class="info"><svg width="7.6" height="7.6" viewBox="0 0 8 8"><circle cx="4" cy="4" r="3.9" fill="#6398c5"/><circle cx="4.1" cy="2.1" r="0.7" fill="#fff"/><path d="M3.3 3.3 H4.6 V6.1 H5 V6.7 H3.2 V6.1 H3.6 V3.9 H3.3 Z" fill="#fff"/></svg></span><span class="c" style="left:62.8px">Fri Dec 14, 2018 8:26 PM</span><span class="c" style="left:171.3px;font-size:8.1px">capture_00050_20181213222241.pcapng</span><span class="c" style="left:387.6px">99.9 MB</span><span class="c" style="left:429px">103841</span><span class="c" style="left:463.7px">145.291657</span><span class="clear">clear</span><span class="spark"><svg width="60" height="10" viewBox="0 0 60 10"><polygon points="0.5,10 0.5,8.6 1.8,8.6 3.0,8.6 4.3,8.6 5.5,8.6 6.8,8.6 8.0,8.6 9.3,8.6 10.5,8.6 11.8,8.6 13.1,8.6 14.3,8.6 15.6,8.6 16.8,8.6 18.1,8.6 19.3,8.6 20.6,8.6 21.8,8.6 23.1,8.6 24.4,8.6 25.6,8.6 26.9,8.6 28.1,8.6 29.4,8.6 30.6,8.6 31.9,8.6 33.1,8.6 34.4,8.6 35.6,8.6 36.9,8.6 38.2,8.6 39.4,8.6 40.7,8.6 41.9,8.6 43.2,8.6 44.4,8.6 45.7,8.6 46.9,8.6 48.2,8.6 49.5,8.6 50.7,8.6 52.0,8.6 53.2,8.6 54.5,8.6 55.7,3.1 57.0,1.4 58.2,6.5 59.5,8.6 59.5,10" fill="#edf4fa"/><polyline points="0.5,8.6 1.8,8.6 3.0,8.6 4.3,8.6 5.5,8.6 6.8,8.6 8.0,8.6 9.3,8.6 10.5,8.6 11.8,8.6 13.1,8.6 14.3,8.6 15.6,8.6 16.8,8.6 18.1,8.6 19.3,8.6 20.6,8.6 21.8,8.6 23.1,8.6 24.4,8.6 25.6,8.6 26.9,8.6 28.1,8.6 29.4,8.6 30.6,8.6 31.9,8.6 33.1,8.6 34.4,8.6 35.6,8.6 36.9,8.6 38.2,8.6 39.4,8.6 40.7,8.6 41.9,8.6 43.2,8.6 44.4,8.6 45.7,8.6 46.9,8.6 48.2,8.6 49.5,8.6 50.7,8.6 52.0,8.6 53.2,8.6 54.5,8.6 55.7,3.1 57.0,1.4 58.2,6.5 59.5,8.6" fill="none" stroke="#4f9ad4" stroke-width="0.9" stroke-linejoin="round"/></svg></span></div>
<div class="row" style="top:168.68px;height:13.84px"><span class="cb"></span><span class="info"><svg width="7.6" height="7.6" viewBox="0 0 8 8"><circle cx="4" cy="4" r="3.9" fill="#6398c5"/><circle cx="4.1" cy="2.1" r="0.7" fill="#fff"/><path d="M3.3 3.3 H4.6 V6.1 H5 V6.7 H3.2 V6.1 H3.6 V3.9 H3.3 Z" fill="#fff"/></svg></span><span class="c" style="left:62.8px">Fri Dec 14, 2018 8:25 PM</span><span class="c" style="left:171.3px;font-size:8.1px">capture_00051_20181213222507.pcapng</span><span class="c" style="left:387.6px">99.9 MB</span><span class="c" style="left:429px">101853</span><span class="c" style="left:463.7px">9.860832</span><span class="clear">clear</span><span class="spark"><svg width="60" height="10" viewBox="0 0 60 10"><polygon points="0.5,10 0.5,2.8 1.8,5.5 3.0,5.0 4.3,3.3 5.5,6.3 6.8,2.9 8.0,6.1 9.3,3.0 10.5,5.3 11.8,2.4 13.1,6.0 14.3,4.6 15.6,5.4 16.8,1.6 18.1,2.2 19.3,2.9 20.6,3.8 21.8,3.7 23.1,4.5 24.4,4.5 25.6,7.1 26.9,4.1 28.1,4.7 29.4,6.5 30.6,7.0 31.9,3.8 33.1,5.9 34.4,5.1 35.6,5.9 36.9,7.3 38.2,3.7 39.4,5.4 40.7,4.2 41.9,4.3 43.2,7.2 44.4,7.2 45.7,8.2 46.9,8.2 48.2,7.7 49.5,5.2 50.7,3.0 52.0,1.5 53.2,1.0 54.5,1.5 55.7,3.0 57.0,5.2 58.2,7.7 59.5,8.2 59.5,10" fill="#edf4fa"/><polyline points="0.5,2.8 1.8,5.5 3.0,5.0 4.3,3.3 5.5,6.3 6.8,2.9 8.0,6.1 9.3,3.0 10.5,5.3 11.8,2.4 13.1,6.0 14.3,4.6 15.6,5.4 16.8,1.6 18.1,2.2 19.3,2.9 20.6,3.8 21.8,3.7 23.1,4.5 24.4,4.5 25.6,7.1 26.9,4.1 28.1,4.7 29.4,6.5 30.6,7.0 31.9,3.8 33.1,5.9 34.4,5.1 35.6,5.9 36.9,7.3 38.2,3.7 39.4,5.4 40.7,4.2 41.9,4.3 43.2,7.2 44.4,7.2 45.7,8.2 46.9,8.2 48.2,7.7 49.5,5.2 50.7,3.0 52.0,1.5 53.2,1.0 54.5,1.5 55.7,3.0 57.0,5.2 58.2,7.7 59.5,8.2" fill="none" stroke="#4f9ad4" stroke-width="0.9" stroke-linejoin="round"/></svg></span></div>
<div class="row" style="top:182.52px;height:13.84px"><span class="cb"></span><span class="info"><svg width="7.6" height="7.6" viewBox="0 0 8 8"><circle cx="4" cy="4" r="3.9" fill="#6398c5"/><circle cx="4.1" cy="2.1" r="0.7" fill="#fff"/><path d="M3.3 3.3 H4.6 V6.1 H5 V6.7 H3.2 V6.1 H3.6 V3.9 H3.3 Z" fill="#fff"/></svg></span><span class="c" style="left:62.8px">Fri Dec 14, 2018 8:25 PM</span><span class="c" style="left:171.3px;font-size:8.1px">capture_00052_20181213222517.pcapng</span><span class="c" style="left:387.6px">99.7 MB</span><span class="c" style="left:429px">100397</span><span class="c" style="left:463.7px">10.419074</span><span class="clear">clear</span><span class="spark"><svg width="60" height="10" viewBox="0 0 60 10"><polygon points="0.5,10 0.5,3.2 1.8,6.9 3.0,5.5 4.3,6.3 5.5,2.9 6.8,5.4 8.0,5.6 9.3,6.3 10.5,2.3 11.8,7.7 13.1,3.6 14.3,5.7 15.6,7.9 16.8,1.2 18.1,6.5 19.3,7.6 20.6,1.2 21.8,6.6 23.1,1.7 24.4,6.6 25.6,2.7 26.9,7.8 28.1,6.7 29.4,7.3 30.6,6.5 31.9,3.7 33.1,7.0 34.4,5.5 35.6,5.8 36.9,6.3 38.2,5.5 39.4,3.5 40.7,5.4 41.9,1.3 43.2,0.9 44.4,1.4 45.7,3.0 46.9,7.3 48.2,3.7 49.5,5.5 50.7,1.5 52.0,7.3 53.2,8.0 54.5,5.5 55.7,5.8 57.0,7.0 58.2,6.1 59.5,6.6 59.5,10" fill="#edf4fa"/><polyline points="0.5,3.2 1.8,6.9 3.0,5.5 4.3,6.3 5.5,2.9 6.8,5.4 8.0,5.6 9.3,6.3 10.5,2.3 11.8,7.7 13.1,3.6 14.3,5.7 15.6,7.9 16.8,1.2 18.1,6.5 19.3,7.6 20.6,1.2 21.8,6.6 23.1,1.7 24.4,6.6 25.6,2.7 26.9,7.8 28.1,6.7 29.4,7.3 30.6,6.5 31.9,3.7 33.1,7.0 34.4,5.5 35.6,5.8 36.9,6.3 38.2,5.5 39.4,3.5 40.7,5.4 41.9,1.3 43.2,0.9 44.4,1.4 45.7,3.0 46.9,7.3 48.2,3.7 49.5,5.5 50.7,1.5 52.0,7.3 53.2,8.0 54.5,5.5 55.7,5.8 57.0,7.0 58.2,6.1 59.5,6.6" fill="none" stroke="#4f9ad4" stroke-width="0.9" stroke-linejoin="round"/></svg></span></div>
<div class="row" style="top:196.36px;height:13.84px"><span class="cb"></span><span class="info"><svg width="7.6" height="7.6" viewBox="0 0 8 8"><circle cx="4" cy="4" r="3.9" fill="#6398c5"/><circle cx="4.1" cy="2.1" r="0.7" fill="#fff"/><path d="M3.3 3.3 H4.6 V6.1 H5 V6.7 H3.2 V6.1 H3.6 V3.9 H3.3 Z" fill="#fff"/></svg></span><span class="c" style="left:62.8px">Fri Dec 14, 2018 8:25 PM</span><span class="c" style="left:171.3px;font-size:8.1px">capture_00055_20181213222546.pcapng</span><span class="c" style="left:387.6px">99.9 MB</span><span class="c" style="left:429px">100489</span><span class="c" style="left:463.7px">11.8064</span><span class="clear">clear</span><span class="spark"><svg width="60" height="10" viewBox="0 0 60 10"><polygon points="0.5,10 0.5,6.4 1.8,5.5 3.0,6.1 4.3,2.0 5.5,7.2 6.8,5.9 8.0,0.8 9.3,6.8 10.5,2.9 11.8,6.8 13.1,6.6 14.3,7.0 15.6,8.1 16.8,3.9 18.1,0.6 19.3,5.8 20.6,7.1 21.8,2.7 23.1,5.7 24.4,5.7 25.6,3.1 26.9,7.2 28.1,1.0 29.4,7.6 30.6,2.3 31.9,5.4 33.1,6.5 34.4,7.8 35.6,3.4 36.9,1.8 38.2,7.3 39.4,5.5 40.7,3.1 41.9,3.4 43.2,6.0 44.4,6.9 45.7,7.4 46.9,5.9 48.2,3.6 49.5,5.4 50.7,5.6 52.0,6.2 53.2,3.2 54.5,6.1 55.7,2.7 57.0,7.9 58.2,1.7 59.5,5.6 59.5,10" fill="#edf4fa"/><polyline points="0.5,6.4 1.8,5.5 3.0,6.1 4.3,2.0 5.5,7.2 6.8,5.9 8.0,0.8 9.3,6.8 10.5,2.9 11.8,6.8 13.1,6.6 14.3,7.0 15.6,8.1 16.8,3.9 18.1,0.6 19.3,5.8 20.6,7.1 21.8,2.7 23.1,5.7 24.4,5.7 25.6,3.1 26.9,7.2 28.1,1.0 29.4,7.6 30.6,2.3 31.9,5.4 33.1,6.5 34.4,7.8 35.6,3.4 36.9,1.8 38.2,7.3 39.4,5.5 40.7,3.1 41.9,3.4 43.2,6.0 44.4,6.9 45.7,7.4 46.9,5.9 48.2,3.6 49.5,5.4 50.7,5.6 52.0,6.2 53.2,3.2 54.5,6.1 55.7,2.7 57.0,7.9 58.2,1.7 59.5,5.6" fill="none" stroke="#4f9ad4" stroke-width="0.9" stroke-linejoin="round"/></svg></span></div>
<div class="row" style="top:210.20px;height:13.84px"><span class="cb"></span><span class="info"><svg width="7.6" height="7.6" viewBox="0 0 8 8"><circle cx="4" cy="4" r="3.9" fill="#6398c5"/><circle cx="4.1" cy="2.1" r="0.7" fill="#fff"/><path d="M3.3 3.3 H4.6 V6.1 H5 V6.7 H3.2 V6.1 H3.6 V3.9 H3.3 Z" fill="#fff"/></svg></span><span class="c" style="left:62.8px">Fri Dec 14, 2018 8:25 PM</span><span class="c" style="left:171.3px;font-size:8.1px">capture_00053_20181213222527.pcapng</span><span class="c" style="left:387.6px">99.7 MB</span><span class="c" style="left:429px">100645</span><span class="c" style="left:463.7px">6.230523</span><span class="clear">clear</span><span class="spark"><svg width="60" height="10" viewBox="0 0 60 10"><polygon points="0.5,10 0.5,6.7 1.8,1.2 3.0,7.2 4.3,6.8 5.5,6.8 6.8,1.6 8.0,3.4 9.3,7.7 10.5,2.6 11.8,3.1 13.1,6.5 14.3,7.2 15.6,7.9 16.8,1.6 18.1,8.1 19.3,6.8 20.6,6.0 21.8,1.2 23.1,7.7 24.4,3.3 25.6,3.0 26.9,6.8 28.1,0.9 29.4,7.4 30.6,5.4 31.9,6.1 33.1,6.8 34.4,5.6 35.6,8.1 36.9,0.8 38.2,6.3 39.4,5.5 40.7,6.8 41.9,5.5 43.2,1.5 44.4,3.3 45.7,5.6 46.9,7.5 48.2,2.2 49.5,7.6 50.7,2.3 52.0,2.6 53.2,6.1 54.5,5.6 55.7,7.2 57.0,7.7 58.2,7.2 59.5,5.2 59.5,10" fill="#edf4fa"/><polyline points="0.5,6.7 1.8,1.2 3.0,7.2 4.3,6.8 5.5,6.8 6.8,1.6 8.0,3.4 9.3,7.7 10.5,2.6 11.8,3.1 13.1,6.5 14.3,7.2 15.6,7.9 16.8,1.6 18.1,8.1 19.3,6.8 20.6,6.0 21.8,1.2 23.1,7.7 24.4,3.3 25.6,3.0 26.9,6.8 28.1,0.9 29.4,7.4 30.6,5.4 31.9,6.1 33.1,6.8 34.4,5.6 35.6,8.1 36.9,0.8 38.2,6.3 39.4,5.5 40.7,6.8 41.9,5.5 43.2,1.5 44.4,3.3 45.7,5.6 46.9,7.5 48.2,2.2 49.5,7.6 50.7,2.3 52.0,2.6 53.2,6.1 54.5,5.6 55.7,7.2 57.0,7.7 58.2,7.2 59.5,5.2" fill="none" stroke="#4f9ad4" stroke-width="0.9" stroke-linejoin="round"/></svg></span></div>
<div class="row" style="top:224.04px;height:13.84px"><span class="cb"></span><span class="info"><svg width="7.6" height="7.6" viewBox="0 0 8 8"><circle cx="4" cy="4" r="3.9" fill="#6398c5"/><circle cx="4.1" cy="2.1" r="0.7" fill="#fff"/><path d="M3.3 3.3 H4.6 V6.1 H5 V6.7 H3.2 V6.1 H3.6 V3.9 H3.3 Z" fill="#fff"/></svg></span><span class="c" style="left:62.8px">Fri Dec 14, 2018 8:25 PM</span><span class="c" style="left:171.3px;font-size:8.1px">capture_00054_20181213222535.pcapng</span><span class="c" style="left:387.6px">99.6 MB</span><span class="c" style="left:429px">100479</span><span class="c" style="left:463.7px">10.412863</span><span class="clear">clear</span><span class="spark"><svg width="60" height="10" viewBox="0 0 60 10"><polygon points="0.5,10 0.5,6.9 1.8,7.3 3.0,2.0 4.3,2.3 5.5,7.7 6.8,7.0 8.0,5.5 9.3,7.1 10.5,3.0 11.8,3.9 13.1,6.2 14.3,5.5 15.6,5.4 16.8,5.9 18.1,8.0 19.3,2.8 20.6,5.3 21.8,2.3 23.1,5.6 24.4,6.1 25.6,7.0 26.9,5.7 28.1,5.5 29.4,7.3 30.6,5.5 31.9,7.1 33.1,6.1 34.4,6.4 35.6,1.1 36.9,6.4 38.2,6.3 39.4,6.1 40.7,3.4 41.9,1.8 43.2,5.7 44.4,7.0 45.7,6.2 46.9,1.2 48.2,7.4 49.5,6.6 50.7,1.4 52.0,6.5 53.2,7.7 54.5,2.0 55.7,7.7 57.0,6.0 58.2,2.1 59.5,7.3 59.5,10" fill="#edf4fa"/><polyline points="0.5,6.9 1.8,7.3 3.0,2.0 4.3,2.3 5.5,7.7 6.8,7.0 8.0,5.5 9.3,7.1 10.5,3.0 11.8,3.9 13.1,6.2 14.3,5.5 15.6,5.4 16.8,5.9 18.1,8.0 19.3,2.8 20.6,5.3 21.8,2.3 23.1,5.6 24.4,6.1 25.6,7.0 26.9,5.7 28.1,5.5 29.4,7.3 30.6,5.5 31.9,7.1 33.1,6.1 34.4,6.4 35.6,1.1 36.9,6.4 38.2,6.3 39.4,6.1 40.7,3.4 41.9,1.8 43.2,5.7 44.4,7.0 45.7,6.2 46.9,1.2 48.2,7.4 49.5,6.6 50.7,1.4 52.0,6.5 53.2,7.7 54.5,2.0 55.7,7.7 57.0,6.0 58.2,2.1 59.5,7.3" fill="none" stroke="#4f9ad4" stroke-width="0.9" stroke-linejoin="round"/></svg></span></div>
<div class="row" style="top:237.88px;height:13.84px"><span class="cb"></span><span class="info"><svg width="7.6" height="7.6" viewBox="0 0 8 8"><circle cx="4" cy="4" r="3.9" fill="#6398c5"/><circle cx="4.1" cy="2.1" r="0.7" fill="#fff"/><path d="M3.3 3.3 H4.6 V6.1 H5 V6.7 H3.2 V6.1 H3.6 V3.9 H3.3 Z" fill="#fff"/></svg></span><span class="c" style="left:62.8px">Fri Dec 14, 2018 8:25 PM</span><span class="c" style="left:171.3px;font-size:8.1px">capture_00056_20181213222558.pcapng</span><span class="c" style="left:387.6px">99.8 MB</span><span class="c" style="left:429px">101174</span><span class="c" style="left:463.7px">13.171168</span><span class="clear">clear</span><span class="spark"><svg width="60" height="10" viewBox="0 0 60 10"><polygon points="0.5,10 0.5,8.0 1.8,6.0 3.0,2.7 4.3,6.2 5.5,6.2 6.8,5.4 8.0,8.0 9.3,3.1 10.5,7.6 11.8,6.6 13.1,7.2 14.3,7.6 15.6,7.0 16.8,1.1 18.1,3.4 19.3,7.0 20.6,8.0 21.8,6.0 23.1,8.0 24.4,7.1 25.6,6.9 26.9,2.6 28.1,6.4 29.4,2.7 30.6,2.3 31.9,6.4 33.1,1.8 34.4,2.7 35.6,6.5 36.9,0.9 38.2,7.8 39.4,6.5 40.7,7.2 41.9,7.7 43.2,7.0 44.4,8.1 45.7,7.3 46.9,1.4 48.2,8.0 49.5,1.1 50.7,6.6 52.0,2.1 53.2,2.9 54.5,7.5 55.7,5.7 57.0,2.5 58.2,7.4 59.5,0.6 59.5,10" fill="#edf4fa"/><polyline points="0.5,8.0 1.8,6.0 3.0,2.7 4.3,6.2 5.5,6.2 6.8,5.4 8.0,8.0 9.3,3.1 10.5,7.6 11.8,6.6 13.1,7.2 14.3,7.6 15.6,7.0 16.8,1.1 18.1,3.4 19.3,7.0 20.6,8.0 21.8,6.0 23.1,8.0 24.4,7.1 25.6,6.9 26.9,2.6 28.1,6.4 29.4,2.7 30.6,2.3 31.9,6.4 33.1,1.8 34.4,2.7 35.6,6.5 36.9,0.9 38.2,7.8 39.4,6.5 40.7,7.2 41.9,7.7 43.2,7.0 44.4,8.1 45.7,7.3 46.9,1.4 48.2,8.0 49.5,1.1 50.7,6.6 52.0,2.1 53.2,2.9 54.5,7.5 55.7,5.7 57.0,2.5 58.2,7.4 59.5,0.6" fill="none" stroke="#4f9ad4" stroke-width="0.9" stroke-linejoin="round"/></svg></span></div>
<div class="row" style="top:251.72px;height:13.84px"><span class="cb"></span><span class="info"><svg width="7.6" height="7.6" viewBox="0 0 8 8"><circle cx="4" cy="4" r="3.9" fill="#6398c5"/><circle cx="4.1" cy="2.1" r="0.7" fill="#fff"/><path d="M3.3 3.3 H4.6 V6.1 H5 V6.7 H3.2 V6.1 H3.6 V3.9 H3.3 Z" fill="#fff"/></svg></span><span class="c" style="left:62.8px">Fri Dec 14, 2018 8:25 PM</span><span class="c" style="left:171.3px;font-size:8.1px">capture_00057_20181213222611.pcapng</span><span class="c" style="left:387.6px">99.5 MB</span><span class="c" style="left:429px">100160</span><span class="c" style="left:463.7px">12.054751</span><span class="clear">clear</span><span class="spark"><svg width="60" height="10" viewBox="0 0 60 10"><polygon points="0.5,10 0.5,5.8 1.8,5.3 3.0,6.3 4.3,1.2 5.5,2.4 6.8,1.8 8.0,5.3 9.3,7.6 10.5,7.2 11.8,5.8 13.1,5.3 14.3,1.1 15.6,2.3 16.8,0.7 18.1,1.3 19.3,6.8 20.6,7.5 21.8,2.1 23.1,6.5 24.4,7.1 25.6,5.8 26.9,7.2 28.1,5.8 29.4,1.2 30.6,5.6 31.9,1.8 33.1,2.2 34.4,7.2 35.6,7.4 36.9,6.0 38.2,7.5 39.4,6.6 40.7,6.2 41.9,1.0 43.2,1.1 44.4,5.9 45.7,5.3 46.9,3.7 48.2,7.1 49.5,6.4 50.7,6.6 52.0,6.1 53.2,6.0 54.5,5.3 55.7,2.0 57.0,7.8 58.2,7.9 59.5,2.7 59.5,10" fill="#edf4fa"/><polyline points="0.5,5.8 1.8,5.3 3.0,6.3 4.3,1.2 5.5,2.4 6.8,1.8 8.0,5.3 9.3,7.6 10.5,7.2 11.8,5.8 13.1,5.3 14.3,1.1 15.6,2.3 16.8,0.7 18.1,1.3 19.3,6.8 20.6,7.5 21.8,2.1 23.1,6.5 24.4,7.1 25.6,5.8 26.9,7.2 28.1,5.8 29.4,1.2 30.6,5.6 31.9,1.8 33.1,2.2 34.4,7.2 35.6,7.4 36.9,6.0 38.2,7.5 39.4,6.6 40.7,6.2 41.9,1.0 43.2,1.1 44.4,5.9 45.7,5.3 46.9,3.7 48.2,7.1 49.5,6.4 50.7,6.6 52.0,6.1 53.2,6.0 54.5,5.3 55.7,2.0 57.0,7.8 58.2,7.9 59.5,2.7" fill="none" stroke="#4f9ad4" stroke-width="0.9" stroke-linejoin="round"/></svg></span></div>
<div class="row" style="top:265.56px;height:13.84px"><span class="cb"></span><span class="info"><svg width="7.6" height="7.6" viewBox="0 0 8 8"><circle cx="4" cy="4" r="3.9" fill="#6398c5"/><circle cx="4.1" cy="2.1" r="0.7" fill="#fff"/><path d="M3.3 3.3 H4.6 V6.1 H5 V6.7 H3.2 V6.1 H3.6 V3.9 H3.3 Z" fill="#fff"/></svg></span><span class="c" style="left:62.8px">Fri Dec 14, 2018 8:25 PM</span><span class="c" style="left:171.3px;font-size:8.1px">capture_00058_20181213222623.pcapng</span><span class="c" style="left:387.6px">99.9 MB</span><span class="c" style="left:429px">100032</span><span class="c" style="left:463.7px">14.672068</span><span class="clear">clear</span><span class="spark"><svg width="60" height="10" viewBox="0 0 60 10"><polygon points="0.5,10 0.5,2.6 1.8,5.9 3.0,7.9 4.3,3.8 5.5,6.7 6.8,7.5 8.0,8.1 9.3,7.9 10.5,2.4 11.8,6.6 13.1,5.4 14.3,5.8 15.6,7.4 16.8,6.9 18.1,5.5 19.3,1.3 20.6,6.3 21.8,7.7 23.1,8.0 24.4,7.3 25.6,6.7 26.9,7.1 28.1,6.7 29.4,2.0 30.6,6.6 31.9,2.8 33.1,5.3 34.4,3.2 35.6,6.7 36.9,5.9 38.2,7.8 39.4,7.2 40.7,7.8 41.9,3.5 43.2,3.5 44.4,8.0 45.7,3.8 46.9,7.9 48.2,5.3 49.5,6.1 50.7,7.0 52.0,5.6 53.2,5.3 54.5,2.5 55.7,7.2 57.0,7.8 58.2,5.5 59.5,6.6 59.5,10" fill="#edf4fa"/><polyline points="0.5,2.6 1.8,5.9 3.0,7.9 4.3,3.8 5.5,6.7 6.8,7.5 8.0,8.1 9.3,7.9 10.5,2.4 11.8,6.6 13.1,5.4 14.3,5.8 15.6,7.4 16.8,6.9 18.1,5.5 19.3,1.3 20.6,6.3 21.8,7.7 23.1,8.0 24.4,7.3 25.6,6.7 26.9,7.1 28.1,6.7 29.4,2.0 30.6,6.6 31.9,2.8 33.1,5.3 34.4,3.2 35.6,6.7 36.9,5.9 38.2,7.8 39.4,7.2 40.7,7.8 41.9,3.5 43.2,3.5 44.4,8.0 45.7,3.8 46.9,7.9 48.2,5.3 49.5,6.1 50.7,7.0 52.0,5.6 53.2,5.3 54.5,2.5 55.7,7.2 57.0,7.8 58.2,5.5 59.5,6.6" fill="none" stroke="#4f9ad4" stroke-width="0.9" stroke-linejoin="round"/></svg></span></div>
<div class="row" style="top:279.40px;height:13.84px"><span class="cb"></span><span class="info"><svg width="7.6" height="7.6" viewBox="0 0 8 8"><circle cx="4" cy="4" r="3.9" fill="#6398c5"/><circle cx="4.1" cy="2.1" r="0.7" fill="#fff"/><path d="M3.3 3.3 H4.6 V6.1 H5 V6.7 H3.2 V6.1 H3.6 V3.9 H3.3 Z" fill="#fff"/></svg></span><span class="c" style="left:62.8px">Fri Dec 14, 2018 8:25 PM</span><span class="c" style="left:171.3px;font-size:8.1px">capture_00059_20181213222637.pcapng</span><span class="c" style="left:387.6px">99.6 MB</span><span class="c" style="left:429px">100486</span><span class="c" style="left:463.7px">12.901129</span><span class="clear">clear</span><span class="spark"><svg width="60" height="10" viewBox="0 0 60 10"><polygon points="0.5,10 0.5,7.7 1.8,7.2 3.0,5.3 4.3,1.6 5.5,2.6 6.8,3.1 8.0,1.1 9.3,5.8 10.5,2.4 11.8,8.0 13.1,2.7 14.3,6.9 15.6,1.7 16.8,1.1 18.1,6.2 19.3,6.1 20.6,7.7 21.8,8.1 23.1,7.5 24.4,1.5 25.6,1.4 26.9,7.5 28.1,6.4 29.4,7.9 30.6,2.2 31.9,7.3 33.1,6.7 34.4,2.1 35.6,5.9 36.9,5.7 38.2,2.8 39.4,2.1 40.7,6.5 41.9,7.0 43.2,7.8 44.4,7.2 45.7,3.9 46.9,5.3 48.2,6.9 49.5,7.3 50.7,8.2 52.0,6.0 53.2,6.8 54.5,6.1 55.7,6.1 57.0,5.8 58.2,7.8 59.5,6.4 59.5,10" fill="#edf4fa"/><polyline points="0.5,7.7 1.8,7.2 3.0,5.3 4.3,1.6 5.5,2.6 6.8,3.1 8.0,1.1 9.3,5.8 10.5,2.4 11.8,8.0 13.1,2.7 14.3,6.9 15.6,1.7 16.8,1.1 18.1,6.2 19.3,6.1 20.6,7.7 21.8,8.1 23.1,7.5 24.4,1.5 25.6,1.4 26.9,7.5 28.1,6.4 29.4,7.9 30.6,2.2 31.9,7.3 33.1,6.7 34.4,2.1 35.6,5.9 36.9,5.7 38.2,2.8 39.4,2.1 40.7,6.5 41.9,7.0 43.2,7.8 44.4,7.2 45.7,3.9 46.9,5.3 48.2,6.9 49.5,7.3 50.7,8.2 52.0,6.0 53.2,6.8 54.5,6.1 55.7,6.1 57.0,5.8 58.2,7.8 59.5,6.4" fill="none" stroke="#4f9ad4" stroke-width="0.9" stroke-linejoin="round"/></svg></span></div>
<div class="row" style="top:293.24px;height:13.84px"><span class="cb"></span><span class="info"><svg width="7.6" height="7.6" viewBox="0 0 8 8"><circle cx="4" cy="4" r="3.9" fill="#6398c5"/><circle cx="4.1" cy="2.1" r="0.7" fill="#fff"/><path d="M3.3 3.3 H4.6 V6.1 H5 V6.7 H3.2 V6.1 H3.6 V3.9 H3.3 Z" fill="#fff"/></svg></span><span class="c" style="left:62.8px">Fri Dec 14, 2018 8:25 PM</span><span class="c" style="left:171.3px;font-size:8.1px">capture_00060_20181213222650.pcapng</span><span class="c" style="left:387.6px">99.7 MB</span><span class="c" style="left:429px">101031</span><span class="c" style="left:463.7px">14.850821</span><span class="clear">clear</span><span class="spark"><svg width="60" height="10" viewBox="0 0 60 10"><polygon points="0.5,10 0.5,1.7 1.8,5.4 3.0,7.2 4.3,6.7 5.5,1.8 6.8,5.6 8.0,6.3 9.3,3.3 10.5,5.7 11.8,6.6 13.1,5.3 14.3,3.5 15.6,7.9 16.8,6.0 18.1,1.1 19.3,3.4 20.6,5.7 21.8,1.4 23.1,7.8 24.4,5.4 25.6,7.1 26.9,5.7 28.1,3.4 29.4,7.1 30.6,5.9 31.9,6.0 33.1,1.0 34.4,8.0 35.6,7.7 36.9,7.6 38.2,1.8 39.4,6.5 40.7,1.0 41.9,6.1 43.2,6.5 44.4,2.8 45.7,6.5 46.9,7.3 48.2,7.6 49.5,1.1 50.7,5.6 52.0,5.6 53.2,2.8 54.5,1.4 55.7,5.2 57.0,6.2 58.2,6.8 59.5,2.0 59.5,10" fill="#edf4fa"/><polyline points="0.5,1.7 1.8,5.4 3.0,7.2 4.3,6.7 5.5,1.8 6.8,5.6 8.0,6.3 9.3,3.3 10.5,5.7 11.8,6.6 13.1,5.3 14.3,3.5 15.6,7.9 16.8,6.0 18.1,1.1 19.3,3.4 20.6,5.7 21.8,1.4 23.1,7.8 24.4,5.4 25.6,7.1 26.9,5.7 28.1,3.4 29.4,7.1 30.6,5.9 31.9,6.0 33.1,1.0 34.4,8.0 35.6,7.7 36.9,7.6 38.2,1.8 39.4,6.5 40.7,1.0 41.9,6.1 43.2,6.5 44.4,2.8 45.7,6.5 46.9,7.3 48.2,7.6 49.5,1.1 50.7,5.6 52.0,5.6 53.2,2.8 54.5,1.4 55.7,5.2 57.0,6.2 58.2,6.8 59.5,2.0" fill="none" stroke="#4f9ad4" stroke-width="0.9" stroke-linejoin="round"/></svg></span></div>
<div class="row" style="top:307.08px;height:13.84px"><span class="cb"></span><span class="info"><svg width="7.6" height="7.6" viewBox="0 0 8 8"><circle cx="4" cy="4" r="3.9" fill="#6398c5"/><circle cx="4.1" cy="2.1" r="0.7" fill="#fff"/><path d="M3.3 3.3 H4.6 V6.1 H5 V6.7 H3.2 V6.1 H3.6 V3.9 H3.3 Z" fill="#fff"/></svg></span><span class="c" style="left:62.8px">Fri Dec 14, 2018 8:25 PM</span><span class="c" style="left:171.3px;font-size:8.1px">capture_00061_20181213222705.pcapng</span><span class="c" style="left:387.6px">99.8 MB</span><span class="c" style="left:429px">100403</span><span class="c" style="left:463.7px">16.914982</span><span class="clear">clear</span><span class="spark"><svg width="60" height="10" viewBox="0 0 60 10"><polygon points="0.5,10 0.5,3.5 1.8,7.0 3.0,7.7 4.3,6.9 5.5,2.8 6.8,7.2 8.0,2.2 9.3,7.5 10.5,6.5 11.8,2.9 13.1,7.1 14.3,6.8 15.6,5.6 16.8,6.7 18.1,7.4 19.3,3.4 20.6,6.2 21.8,3.4 23.1,3.5 24.4,0.8 25.6,7.3 26.9,8.0 28.1,3.9 29.4,6.0 30.6,7.9 31.9,5.3 33.1,1.5 34.4,2.6 35.6,3.4 36.9,6.7 38.2,7.2 39.4,1.6 40.7,2.4 41.9,7.1 43.2,2.4 44.4,8.2 45.7,5.7 46.9,5.4 48.2,2.1 49.5,5.8 50.7,1.2 52.0,7.2 53.2,6.4 54.5,2.5 55.7,2.0 57.0,3.8 58.2,0.7 59.5,1.3 59.5,10" fill="#edf4fa"/><polyline points="0.5,3.5 1.8,7.0 3.0,7.7 4.3,6.9 5.5,2.8 6.8,7.2 8.0,2.2 9.3,7.5 10.5,6.5 11.8,2.9 13.1,7.1 14.3,6.8 15.6,5.6 16.8,6.7 18.1,7.4 19.3,3.4 20.6,6.2 21.8,3.4 23.1,3.5 24.4,0.8 25.6,7.3 26.9,8.0 28.1,3.9 29.4,6.0 30.6,7.9 31.9,5.3 33.1,1.5 34.4,2.6 35.6,3.4 36.9,6.7 38.2,7.2 39.4,1.6 40.7,2.4 41.9,7.1 43.2,2.4 44.4,8.2 45.7,5.7 46.9,5.4 48.2,2.1 49.5,5.8 50.7,1.2 52.0,7.2 53.2,6.4 54.5,2.5 55.7,2.0 57.0,3.8 58.2,0.7 59.5,1.3" fill="none" stroke="#4f9ad4" stroke-width="0.9" stroke-linejoin="round"/></svg></span></div>
<div class="row" style="top:320.92px;height:13.84px"><span class="cb"></span><span class="info"><svg width="7.6" height="7.6" viewBox="0 0 8 8"><circle cx="4" cy="4" r="3.9" fill="#6398c5"/><circle cx="4.1" cy="2.1" r="0.7" fill="#fff"/><path d="M3.3 3.3 H4.6 V6.1 H5 V6.7 H3.2 V6.1 H3.6 V3.9 H3.3 Z" fill="#fff"/></svg></span><span class="c" style="left:62.8px">Fri Dec 14, 2018 8:25 PM</span><span class="c" style="left:171.3px;font-size:8.1px">capture_00062_20181213222722.pcapng</span><span class="c" style="left:387.6px">99.7 MB</span><span class="c" style="left:429px">101173</span><span class="c" style="left:463.7px">14.272917</span><span class="clear">clear</span><span class="spark"><svg width="60" height="10" viewBox="0 0 60 10"><polygon points="0.5,10 0.5,5.7 1.8,3.5 3.0,1.5 4.3,5.5 5.5,3.8 6.8,7.5 8.0,6.0 9.3,7.4 10.5,6.6 11.8,6.3 13.1,7.3 14.3,8.0 15.6,7.0 16.8,6.7 18.1,6.7 19.3,3.9 20.6,5.4 21.8,7.0 23.1,5.5 24.4,5.3 25.6,6.5 26.9,6.7 28.1,6.8 29.4,8.0 30.6,6.9 31.9,8.1 33.1,2.8 34.4,2.0 35.6,7.2 36.9,1.2 38.2,8.1 39.4,6.5 40.7,7.5 41.9,5.6 43.2,6.3 44.4,7.0 45.7,5.9 46.9,7.7 48.2,8.0 49.5,5.4 50.7,1.9 52.0,7.7 53.2,1.0 54.5,7.3 55.7,7.2 57.0,7.2 58.2,6.8 59.5,7.5 59.5,10" fill="#edf4fa"/><polyline points="0.5,5.7 1.8,3.5 3.0,1.5 4.3,5.5 5.5,3.8 6.8,7.5 8.0,6.0 9.3,7.4 10.5,6.6 11.8,6.3 13.1,7.3 14.3,8.0 15.6,7.0 16.8,6.7 18.1,6.7 19.3,3.9 20.6,5.4 21.8,7.0 23.1,5.5 24.4,5.3 25.6,6.5 26.9,6.7 28.1,6.8 29.4,8.0 30.6,6.9 31.9,8.1 33.1,2.8 34.4,2.0 35.6,7.2 36.9,1.2 38.2,8.1 39.4,6.5 40.7,7.5 41.9,5.6 43.2,6.3 44.4,7.0 45.7,5.9 46.9,7.7 48.2,8.0 49.5,5.4 50.7,1.9 52.0,7.7 53.2,1.0 54.5,7.3 55.7,7.2 57.0,7.2 58.2,6.8 59.5,7.5" fill="none" stroke="#4f9ad4" stroke-width="0.9" stroke-linejoin="round"/></svg></span></div>
<div class="row" style="top:334.76px;height:13.84px"><span class="cb"></span><span class="info"><svg width="7.6" height="7.6" viewBox="0 0 8 8"><circle cx="4" cy="4" r="3.9" fill="#6398c5"/><circle cx="4.1" cy="2.1" r="0.7" fill="#fff"/><path d="M3.3 3.3 H4.6 V6.1 H5 V6.7 H3.2 V6.1 H3.6 V3.9 H3.3 Z" fill="#fff"/></svg></span><span class="c" style="left:62.8px">Fri Dec 14, 2018 8:25 PM</span><span class="c" style="left:171.3px;font-size:8.1px">capture_00063_20181213222736.pcapng</span><span class="c" style="left:387.6px">99.7 MB</span><span class="c" style="left:429px">99869</span><span class="c" style="left:463.7px">16.863033</span><span class="clear">clear</span><span class="spark"><svg width="60" height="10" viewBox="0 0 60 10"><polygon points="0.5,10 0.5,8.1 1.8,6.8 3.0,5.4 4.3,1.4 5.5,5.9 6.8,6.6 8.0,5.8 9.3,7.1 10.5,6.1 11.8,3.9 13.1,7.7 14.3,6.2 15.6,3.7 16.8,7.5 18.1,7.0 19.3,5.8 20.6,5.5 21.8,2.5 23.1,7.8 24.4,5.9 25.6,1.2 26.9,7.0 28.1,2.1 29.4,7.2 30.6,7.7 31.9,5.3 33.1,6.4 34.4,0.7 35.6,7.3 36.9,3.1 38.2,2.6 39.4,8.0 40.7,6.3 41.9,5.5 43.2,3.7 44.4,6.2 45.7,8.1 46.9,6.6 48.2,6.7 49.5,2.1 50.7,7.4 52.0,5.8 53.2,6.0 54.5,5.7 55.7,1.2 57.0,3.1 58.2,5.7 59.5,7.7 59.5,10" fill="#edf4fa"/><polyline points="0.5,8.1 1.8,6.8 3.0,5.4 4.3,1.4 5.5,5.9 6.8,6.6 8.0,5.8 9.3,7.1 10.5,6.1 11.8,3.9 13.1,7.7 14.3,6.2 15.6,3.7 16.8,7.5 18.1,7.0 19.3,5.8 20.6,5.5 21.8,2.5 23.1,7.8 24.4,5.9 25.6,1.2 26.9,7.0 28.1,2.1 29.4,7.2 30.6,7.7 31.9,5.3 33.1,6.4 34.4,0.7 35.6,7.3 36.9,3.1 38.2,2.6 39.4,8.0 40.7,6.3 41.9,5.5 43.2,3.7 44.4,6.2 45.7,8.1 46.9,6.6 48.2,6.7 49.5,2.1 50.7,7.4 52.0,5.8 53.2,6.0 54.5,5.7 55.7,1.2 57.0,3.1 58.2,5.7 59.5,7.7" fill="none" stroke="#4f9ad4" stroke-width="0.9" stroke-linejoin="round"/></svg></span></div>
<div class="row" style="top:348.60px;height:13.84px"><span class="cb"></span><span class="info"><svg width="7.6" height="7.6" viewBox="0 0 8 8"><circle cx="4" cy="4" r="3.9" fill="#6398c5"/><circle cx="4.1" cy="2.1" r="0.7" fill="#fff"/><path d="M3.3 3.3 H4.6 V6.1 H5 V6.7 H3.2 V6.1 H3.6 V3.9 H3.3 Z" fill="#fff"/></svg></span><span class="c" style="left:62.8px">Fri Dec 14, 2018 8:25 PM</span><span class="c" style="left:171.3px;font-size:8.1px">capture_00064_20181213222753.pcapng</span><span class="c" style="left:387.6px">99.9 MB</span><span class="c" style="left:429px">100652</span><span class="c" style="left:463.7px">17.91211</span><span class="clear">clear</span><span class="spark"><svg width="60" height="10" viewBox="0 0 60 10"><polygon points="0.5,10 0.5,3.2 1.8,8.0 3.0,1.5 4.3,7.6 5.5,3.7 6.8,7.3 8.0,1.1 9.3,3.6 10.5,7.5 11.8,3.1 13.1,1.8 14.3,7.5 15.6,2.9 16.8,6.9 18.1,2.2 19.3,8.1 20.6,6.9 21.8,3.9 23.1,6.1 24.4,7.6 25.6,7.3 26.9,1.2 28.1,6.3 29.4,3.4 30.6,3.6 31.9,5.8 33.1,6.6 34.4,6.6 35.6,5.2 36.9,6.4 38.2,6.1 39.4,5.4 40.7,7.4 41.9,2.2 43.2,2.1 44.4,2.5 45.7,6.4 46.9,1.8 48.2,7.3 49.5,2.5 50.7,6.0 52.0,5.8 53.2,3.5 54.5,7.6 55.7,6.5 57.0,2.0 58.2,2.4 59.5,6.7 59.5,10" fill="#edf4fa"/><polyline points="0.5,3.2 1.8,8.0 3.0,1.5 4.3,7.6 5.5,3.7 6.8,7.3 8.0,1.1 9.3,3.6 10.5,7.5 11.8,3.1 13.1,1.8 14.3,7.5 15.6,2.9 16.8,6.9 18.1,2.2 19.3,8.1 20.6,6.9 21.8,3.9 23.1,6.1 24.4,7.6 25.6,7.3 26.9,1.2 28.1,6.3 29.4,3.4 30.6,3.6 31.9,5.8 33.1,6.6 34.4,6.6 35.6,5.2 36.9,6.4 38.2,6.1 39.4,5.4 40.7,7.4 41.9,2.2 43.2,2.1 44.4,2.5 45.7,6.4 46.9,1.8 48.2,7.3 49.5,2.5 50.7,6.0 52.0,5.8 53.2,3.5 54.5,7.6 55.7,6.5 57.0,2.0 58.2,2.4 59.5,6.7" fill="none" stroke="#4f9ad4" stroke-width="0.9" stroke-linejoin="round"/></svg></span></div>
<div class="row" style="top:362.44px;height:13.84px"><span class="cb"></span><span class="info"><svg width="7.6" height="7.6" viewBox="0 0 8 8"><circle cx="4" cy="4" r="3.9" fill="#6398c5"/><circle cx="4.1" cy="2.1" r="0.7" fill="#fff"/><path d="M3.3 3.3 H4.6 V6.1 H5 V6.7 H3.2 V6.1 H3.6 V3.9 H3.3 Z" fill="#fff"/></svg></span><span class="c" style="left:62.8px">Fri Dec 14, 2018 8:25 PM</span><span class="c" style="left:171.3px;font-size:8.1px">capture_00069_20181213222909.pcapng</span><span class="c" style="left:387.6px">99.9 MB</span><span class="c" style="left:429px">99999</span><span class="c" style="left:463.7px">12.043467</span><span class="clear">clear</span><span class="spark"><svg width="60" height="10" viewBox="0 0 60 10"><polygon points="0.5,10 0.5,0.9 1.8,5.9 3.0,5.8 4.3,3.0 5.5,0.8 6.8,7.6 8.0,6.9 9.3,7.2 10.5,1.3 11.8,2.6 13.1,5.9 14.3,7.4 15.6,7.2 16.8,3.2 18.1,7.8 19.3,6.5 20.6,5.3 21.8,7.0 23.1,6.7 24.4,6.8 25.6,5.3 26.9,7.2 28.1,2.4 29.4,6.2 30.6,3.1 31.9,2.2 33.1,0.7 34.4,5.4 35.6,8.1 36.9,3.1 38.2,7.3 39.4,5.9 40.7,5.3 41.9,5.4 43.2,7.8 44.4,0.6 45.7,6.1 46.9,5.5 48.2,6.2 49.5,6.8 50.7,6.9 52.0,2.4 53.2,7.8 54.5,6.2 55.7,7.1 57.0,6.3 58.2,5.8 59.5,1.8 59.5,10" fill="#edf4fa"/><polyline points="0.5,0.9 1.8,5.9 3.0,5.8 4.3,3.0 5.5,0.8 6.8,7.6 8.0,6.9 9.3,7.2 10.5,1.3 11.8,2.6 13.1,5.9 14.3,7.4 15.6,7.2 16.8,3.2 18.1,7.8 19.3,6.5 20.6,5.3 21.8,7.0 23.1,6.7 24.4,6.8 25.6,5.3 26.9,7.2 28.1,2.4 29.4,6.2 30.6,3.1 31.9,2.2 33.1,0.7 34.4,5.4 35.6,8.1 36.9,3.1 38.2,7.3 39.4,5.9 40.7,5.3 41.9,5.4 43.2,7.8 44.4,0.6 45.7,6.1 46.9,5.5 48.2,6.2 49.5,6.8 50.7,6.9 52.0,2.4 53.2,7.8 54.5,6.2 55.7,7.1 57.0,6.3 58.2,5.8 59.5,1.8" fill="none" stroke="#4f9ad4" stroke-width="0.9" stroke-linejoin="round"/></svg></span></div>
<div class="row" style="top:376.28px;height:13.84px"><span class="cb"></span><span class="info"><svg width="7.6" height="7.6" viewBox="0 0 8 8"><circle cx="4" cy="4" r="3.9" fill="#6398c5"/><circle cx="4.1" cy="2.1" r="0.7" fill="#fff"/><path d="M3.3 3.3 H4.6 V6.1 H5 V6.7 H3.2 V6.1 H3.6 V3.9 H3.3 Z" fill="#fff"/></svg></span><span class="c" style="left:62.8px">Fri Dec 14, 2018 8:25 PM</span><span class="c" style="left:171.3px;font-size:8.1px">capture_00068_20181213222858.pcapng</span><span class="c" style="left:387.6px">99.7 MB</span><span class="c" style="left:429px">99722</span><span class="c" style="left:463.7px">11.593827</span><span class="clear">clear</span><span class="spark"><svg width="60" height="10" viewBox="0 0 60 10"><polygon points="0.5,10 0.5,1.9 1.8,7.1 3.0,3.5 4.3,7.5 5.5,5.2 6.8,6.0 8.0,2.1 9.3,1.8 10.5,5.5 11.8,2.1 13.1,7.1 14.3,7.9 15.6,7.6 16.8,5.3 18.1,8.1 19.3,3.7 20.6,5.5 21.8,6.4 23.1,6.2 24.4,7.2 25.6,7.3 26.9,6.6 28.1,6.0 29.4,6.8 30.6,3.3 31.9,6.8 33.1,7.3 34.4,1.7 35.6,2.5 36.9,7.9 38.2,6.3 39.4,5.6 40.7,7.0 41.9,7.5 43.2,6.3 44.4,6.9 45.7,7.9 46.9,2.1 48.2,1.9 49.5,5.9 50.7,5.9 52.0,2.8 53.2,2.7 54.5,5.9 55.7,5.3 57.0,2.1 58.2,6.7 59.5,6.5 59.5,10" fill="#edf4fa"/><polyline points="0.5,1.9 1.8,7.1 3.0,3.5 4.3,7.5 5.5,5.2 6.8,6.0 8.0,2.1 9.3,1.8 10.5,5.5 11.8,2.1 13.1,7.1 14.3,7.9 15.6,7.6 16.8,5.3 18.1,8.1 19.3,3.7 20.6,5.5 21.8,6.4 23.1,6.2 24.4,7.2 25.6,7.3 26.9,6.6 28.1,6.0 29.4,6.8 30.6,3.3 31.9,6.8 33.1,7.3 34.4,1.7 35.6,2.5 36.9,7.9 38.2,6.3 39.4,5.6 40.7,7.0 41.9,7.5 43.2,6.3 44.4,6.9 45.7,7.9 46.9,2.1 48.2,1.9 49.5,5.9 50.7,5.9 52.0,2.8 53.2,2.7 54.5,5.9 55.7,5.3 57.0,2.1 58.2,6.7 59.5,6.5" fill="none" stroke="#4f9ad4" stroke-width="0.9" stroke-linejoin="round"/></svg></span></div>
<div class="row" style="top:390.12px;height:13.84px"><span class="cb"></span><span class="info"><svg width="7.6" height="7.6" viewBox="0 0 8 8"><circle cx="4" cy="4" r="3.9" fill="#6398c5"/><circle cx="4.1" cy="2.1" r="0.7" fill="#fff"/><path d="M3.3 3.3 H4.6 V6.1 H5 V6.7 H3.2 V6.1 H3.6 V3.9 H3.3 Z" fill="#fff"/></svg></span><span class="c" style="left:62.8px">Fri Dec 14, 2018 8:25 PM</span><span class="c" style="left:171.3px;font-size:8.1px">capture_00067_20181213222841.pcapng</span><span class="c" style="left:387.6px">99.9 MB</span><span class="c" style="left:429px">100566</span><span class="c" style="left:463.7px">16.661675</span><span class="clear">clear</span><span class="spark"><svg width="60" height="10" viewBox="0 0 60 10"><polygon points="0.5,10 0.5,7.0 1.8,6.7 3.0,2.5 4.3,7.0 5.5,1.9 6.8,1.4 8.0,1.0 9.3,1.4 10.5,2.2 11.8,2.0 13.1,5.2 14.3,7.0 15.6,6.9 16.8,7.6 18.1,5.7 19.3,5.3 20.6,8.1 21.8,5.7 23.1,5.4 24.4,3.9 25.6,3.5 26.9,1.3 28.1,6.0 29.4,1.3 30.6,5.6 31.9,3.5 33.1,7.7 34.4,5.4 35.6,3.3 36.9,6.0 38.2,7.1 39.4,5.6 40.7,5.9 41.9,2.2 43.2,6.1 44.4,5.9 45.7,7.9 46.9,7.4 48.2,5.6 49.5,6.3 50.7,6.6 52.0,7.4 53.2,7.0 54.5,1.3 55.7,1.7 57.0,1.1 58.2,6.5 59.5,7.9 59.5,10" fill="#edf4fa"/><polyline points="0.5,7.0 1.8,6.7 3.0,2.5 4.3,7.0 5.5,1.9 6.8,1.4 8.0,1.0 9.3,1.4 10.5,2.2 11.8,2.0 13.1,5.2 14.3,7.0 15.6,6.9 16.8,7.6 18.1,5.7 19.3,5.3 20.6,8.1 21.8,5.7 23.1,5.4 24.4,3.9 25.6,3.5 26.9,1.3 28.1,6.0 29.4,1.3 30.6,5.6 31.9,3.5 33.1,7.7 34.4,5.4 35.6,3.3 36.9,6.0 38.2,7.1 39.4,5.6 40.7,5.9 41.9,2.2 43.2,6.1 44.4,5.9 45.7,7.9 46.9,7.4 48.2,5.6 49.5,6.3 50.7,6.6 52.0,7.4 53.2,7.0 54.5,1.3 55.7,1.7 57.0,1.1 58.2,6.5 59.5,7.9" fill="none" stroke="#4f9ad4" stroke-width="0.9" stroke-linejoin="round"/></svg></span></div>
<div class="row" style="top:403.96px;height:13.84px"><span class="cb"></span><span class="info"><svg width="7.6" height="7.6" viewBox="0 0 8 8"><circle cx="4" cy="4" r="3.9" fill="#6398c5"/><circle cx="4.1" cy="2.1" r="0.7" fill="#fff"/><path d="M3.3 3.3 H4.6 V6.1 H5 V6.7 H3.2 V6.1 H3.6 V3.9 H3.3 Z" fill="#fff"/></svg></span><span class="c" style="left:62.8px">Fri Dec 14, 2018 8:25 PM</span><span class="c" style="left:171.3px;font-size:8.1px">capture_00066_20181213222826.pcapng</span><span class="c" style="left:387.6px">99.8 MB</span><span class="c" style="left:429px">100253</span><span class="c" style="left:463.7px">15.429907</span><span class="clear">clear</span><span class="spark"><svg width="60" height="10" viewBox="0 0 60 10"><polygon points="0.5,10 0.5,6.7 1.8,1.0 3.0,6.7 4.3,6.6 5.5,6.3 6.8,1.5 8.0,3.9 9.3,6.9 10.5,5.2 11.8,3.6 13.1,3.9 14.3,5.4 15.6,6.0 16.8,2.7 18.1,5.7 19.3,5.6 20.6,6.9 21.8,3.7 23.1,2.1 24.4,7.8 25.6,5.9 26.9,2.5 28.1,7.2 29.4,7.5 30.6,6.4 31.9,5.6 33.1,7.5 34.4,8.0 35.6,2.8 36.9,2.9 38.2,7.9 39.4,7.9 40.7,7.2 41.9,5.4 43.2,1.8 44.4,7.7 45.7,5.3 46.9,6.2 48.2,6.4 49.5,1.7 50.7,5.6 52.0,6.4 53.2,5.9 54.5,1.7 55.7,7.5 57.0,8.0 58.2,5.7 59.5,6.9 59.5,10" fill="#edf4fa"/><polyline points="0.5,6.7 1.8,1.0 3.0,6.7 4.3,6.6 5.5,6.3 6.8,1.5 8.0,3.9 9.3,6.9 10.5,5.2 11.8,3.6 13.1,3.9 14.3,5.4 15.6,6.0 16.8,2.7 18.1,5.7 19.3,5.6 20.6,6.9 21.8,3.7 23.1,2.1 24.4,7.8 25.6,5.9 26.9,2.5 28.1,7.2 29.4,7.5 30.6,6.4 31.9,5.6 33.1,7.5 34.4,8.0 35.6,2.8 36.9,2.9 38.2,7.9 39.4,7.9 40.7,7.2 41.9,5.4 43.2,1.8 44.4,7.7 45.7,5.3 46.9,6.2 48.2,6.4 49.5,1.7 50.7,5.6 52.0,6.4 53.2,5.9 54.5,1.7 55.7,7.5 57.0,8.0 58.2,5.7 59.5,6.9" fill="none" stroke="#4f9ad4" stroke-width="0.9" stroke-linejoin="round"/></svg></span></div>
<div class="row" style="top:417.80px;height:13.84px"><span class="cb"></span><span class="info"><svg width="7.6" height="7.6" viewBox="0 0 8 8"><circle cx="4" cy="4" r="3.9" fill="#6398c5"/><circle cx="4.1" cy="2.1" r="0.7" fill="#fff"/><path d="M3.3 3.3 H4.6 V6.1 H5 V6.7 H3.2 V6.1 H3.6 V3.9 H3.3 Z" fill="#fff"/></svg></span><span class="c" style="left:62.8px">Fri Dec 14, 2018 8:25 PM</span><span class="c" style="left:171.3px;font-size:8.1px">capture_00065_20181213222811.pcapng</span><span class="c" style="left:387.6px">99.6 MB</span><span class="c" style="left:429px">99287</span><span class="c" style="left:463.7px">14.482465</span><span class="clear">clear</span><span class="spark"><svg width="60" height="10" viewBox="0 0 60 10"><polygon points="0.5,10 0.5,7.1 1.8,1.3 3.0,7.4 4.3,2.1 5.5,8.0 6.8,5.9 8.0,7.6 9.3,7.5 10.5,7.3 11.8,7.9 13.1,6.7 14.3,6.3 15.6,5.7 16.8,3.1 18.1,3.1 19.3,3.9 20.6,6.1 21.8,7.8 23.1,0.6 24.4,8.1 25.6,6.6 26.9,6.0 28.1,0.9 29.4,6.2 30.6,7.0 31.9,3.5 33.1,1.8 34.4,2.4 35.6,7.4 36.9,7.9 38.2,6.8 39.4,6.1 40.7,1.1 41.9,7.8 43.2,6.9 44.4,5.7 45.7,5.9 46.9,6.0 48.2,3.3 49.5,5.5 50.7,6.9 52.0,6.2 53.2,7.8 54.5,6.9 55.7,7.1 57.0,6.6 58.2,0.8 59.5,0.7 59.5,10" fill="#edf4fa"/><polyline points="0.5,7.1 1.8,1.3 3.0,7.4 4.3,2.1 5.5,8.0 6.8,5.9 8.0,7.6 9.3,7.5 10.5,7.3 11.8,7.9 13.1,6.7 14.3,6.3 15.6,5.7 16.8,3.1 18.1,3.1 19.3,3.9 20.6,6.1 21.8,7.8 23.1,0.6 24.4,8.1 25.6,6.6 26.9,6.0 28.1,0.9 29.4,6.2 30.6,7.0 31.9,3.5 33.1,1.8 34.4,2.4 35.6,7.4 36.9,7.9 38.2,6.8 39.4,6.1 40.7,1.1 41.9,7.8 43.2,6.9 44.4,5.7 45.7,5.9 46.9,6.0 48.2,3.3 49.5,5.5 50.7,6.9 52.0,6.2 53.2,7.8 54.5,6.9 55.7,7.1 57.0,6.6 58.2,0.8 59.5,0.7" fill="none" stroke="#4f9ad4" stroke-width="0.9" stroke-linejoin="round"/></svg></span></div>
</div>
</body></html>
